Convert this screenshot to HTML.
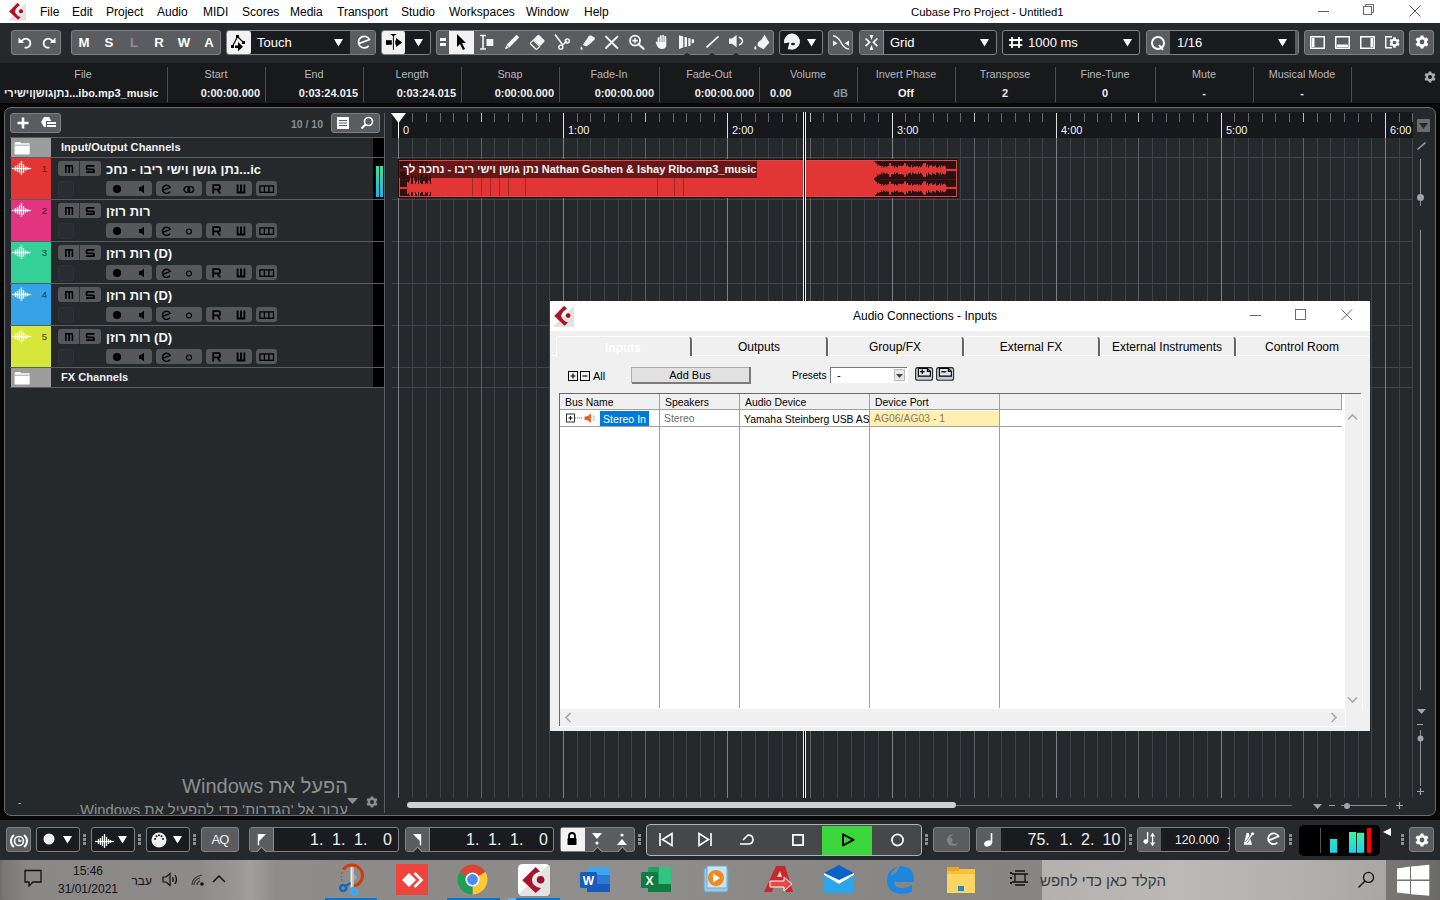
<!DOCTYPE html>
<html><head><meta charset="utf-8">
<style>
*{margin:0;padding:0;box-sizing:border-box}
html,body{width:1440px;height:900px;overflow:hidden;background:#060606;font-family:"Liberation Sans",sans-serif}
.a{position:absolute}
.t{position:absolute;white-space:nowrap}
</style></head><body>

<div class="a" style="left:0px;top:0px;width:1440px;height:23px;background:#ffffff;border-radius:0px;"></div>
<svg class="a" style="left:4px;top:0px;" width="24" height="24" viewBox="0 0 24 24"><path d="M4,20.8 L22,2.8 L22,20.8 Z" fill="#e2e2e2"/><path d="M13.5,2.8 L5,11.5 L14,19.8 L16.8,17.2 Q12,15.5 11,11.5 Q12,7.5 16,5.3 Z" fill="#ad1528"/><circle cx="17" cy="11.2" r="2" fill="#a0101f"/></svg>
<div class="t" style="left:40px;top:5.84px;font-size:12px;line-height:12px;color:#000;font-weight:400;">File</div>
<div class="t" style="left:72px;top:5.84px;font-size:12px;line-height:12px;color:#000;font-weight:400;">Edit</div>
<div class="t" style="left:106px;top:5.84px;font-size:12px;line-height:12px;color:#000;font-weight:400;">Project</div>
<div class="t" style="left:157px;top:5.84px;font-size:12px;line-height:12px;color:#000;font-weight:400;">Audio</div>
<div class="t" style="left:203px;top:5.84px;font-size:12px;line-height:12px;color:#000;font-weight:400;">MIDI</div>
<div class="t" style="left:242px;top:5.84px;font-size:12px;line-height:12px;color:#000;font-weight:400;">Scores</div>
<div class="t" style="left:290px;top:5.84px;font-size:12px;line-height:12px;color:#000;font-weight:400;">Media</div>
<div class="t" style="left:337px;top:5.84px;font-size:12px;line-height:12px;color:#000;font-weight:400;">Transport</div>
<div class="t" style="left:401px;top:5.84px;font-size:12px;line-height:12px;color:#000;font-weight:400;">Studio</div>
<div class="t" style="left:449px;top:5.84px;font-size:12px;line-height:12px;color:#000;font-weight:400;">Workspaces</div>
<div class="t" style="left:526px;top:5.84px;font-size:12px;line-height:12px;color:#000;font-weight:400;">Window</div>
<div class="t" style="left:584px;top:5.84px;font-size:12px;line-height:12px;color:#000;font-weight:400;">Help</div>
<div class="t" style="left:911px;top:7.23px;font-size:11.3px;line-height:11.3px;color:#000;font-weight:400;">Cubase Pro Project - Untitled1</div>
<div class="a" style="left:1318px;top:11px;width:11px;height:1px;background:#5a5a5a;border-radius:0px;"></div>
<svg class="a" style="left:1363px;top:4px;" width="12" height="12" viewBox="0 0 12 12"><rect x="0.5" y="2.5" width="8" height="8" fill="none" stroke="#6a6a6a"/><path d="M2.5,2.5 V0.5 H10.5 V8.5 H8.5" fill="none" stroke="#6a6a6a"/></svg>
<svg class="a" style="left:1409px;top:5px;" width="12" height="12" viewBox="0 0 12 12"><path d="M0.5,0.5 L11.5,11.5 M11.5,0.5 L0.5,11.5" stroke="#5a5a5a" stroke-width="1"/></svg>
<div class="a" style="left:0px;top:23px;width:1440px;height:40px;background:#26292c;border-radius:0px;"></div>
<div class="a" style="left:11px;top:30px;width:50px;height:25px;background:#5a5c60;border:1px solid #7e8084;border-radius:3px;"></div>
<svg class="a" style="left:18px;top:36px;" width="14" height="13" viewBox="0 0 14 13"><path d="M3.5,6 A4.5,4.5 0 1 1 6.5,11.5" fill="none" stroke="#fff" stroke-width="1.8"/><path d="M0.5,1.5 L0.5,7 L6,7 Z" fill="#fff"/></svg>
<svg class="a" style="left:42px;top:36px;" width="14" height="13" viewBox="0 0 14 13"><path d="M10.5,6 A4.5,4.5 0 1 0 7.5,11.5" fill="none" stroke="#fff" stroke-width="1.8"/><path d="M13.5,1.5 L13.5,7 L8,7 Z" fill="#fff"/></svg>
<div class="a" style="left:71px;top:30px;width:150px;height:25px;background:#5a5c60;border:1px solid #7e8084;border-radius:3px;"></div>
<div class="t" style="left:-216px;width:600px;text-align:center;top:36.43px;font-size:13.2px;line-height:13.2px;color:#fff;font-weight:700;">M</div>
<div class="t" style="left:-191px;width:600px;text-align:center;top:36.43px;font-size:13.2px;line-height:13.2px;color:#fff;font-weight:700;">S</div>
<div class="t" style="left:-166px;width:600px;text-align:center;top:36.43px;font-size:13.2px;line-height:13.2px;color:#8c8e92;font-weight:700;">L</div>
<div class="t" style="left:-141px;width:600px;text-align:center;top:36.43px;font-size:13.2px;line-height:13.2px;color:#fff;font-weight:700;">R</div>
<div class="t" style="left:-116px;width:600px;text-align:center;top:36.43px;font-size:13.2px;line-height:13.2px;color:#fff;font-weight:700;">W</div>
<div class="t" style="left:-91px;width:600px;text-align:center;top:36.43px;font-size:13.2px;line-height:13.2px;color:#fff;font-weight:700;">A</div>
<div class="a" style="left:226px;top:30px;width:150px;height:25px;background:#1a1b1e;border:1px solid #7e8084;border-radius:3px;"></div>
<div class="a" style="left:227px;top:31px;width:24px;height:23px;background:#f2f2f2;border:none;border-radius:2px;"></div>
<div class="a" style="left:350px;top:31px;width:25px;height:23px;background:#5a5c60;border-radius:0px;"></div>
<svg class="a" style="left:226px;top:30px;" width="25" height="25" viewBox="0 0 25 25"><path d="M11.5,6.5 L6.5,16.5 M11.5,6.5 L17.5,12.5" stroke="#000" stroke-width="1.2" fill="none"/><rect x="10" y="5" width="3" height="3" fill="#000"/><rect x="16" y="11" width="3" height="3" fill="#000"/><rect x="5" y="15" width="3" height="3" fill="#000"/><rect x="9" y="15.5" width="4" height="2.5" fill="#000"/><path d="M12,12 L17,16.7 L12,21.3 Z" fill="#000"/></svg>
<div class="t" style="left:257px;top:35.70px;font-size:13px;line-height:13px;color:#fff;font-weight:400;">Touch</div>
<svg class="a" style="left:334px;top:39px;" width="11" height="9" viewBox="0 0 11 9"><path d="M0,0 H9 L4.5,7.5 Z" fill="#fff"/></svg>
<svg class="a" style="left:356px;top:34px;" width="16" height="16" viewBox="0 0 16 16"><path d="M2.6,9.8 L13.5,5.6 A5.8,5.8 0 1 0 12.7,11.9" fill="none" stroke="#fff" stroke-width="1.7"/></svg>
<div class="a" style="left:381px;top:30px;width:50px;height:25px;background:#1a1b1e;border:1px solid #7e8084;border-radius:3px;"></div>
<div class="a" style="left:382px;top:31px;width:23px;height:23px;background:#f2f2f2;border:none;border-radius:2px;"></div>
<svg class="a" style="left:381px;top:30px;" width="25" height="25" viewBox="0 0 25 25"><rect x="5" y="10.2" width="5.8" height="4.6" fill="#000"/><path d="M12.4,4 V19.8" stroke="#000" stroke-width="1"/><path d="M9,4 H16 L12.4,6.3 Z" fill="#000"/><path d="M14.3,10.5 H15 V7.9 L21.2,12.5 L15,17.1 V14.5 H14.3 Z" fill="#000"/></svg>
<svg class="a" style="left:414px;top:39px;" width="11" height="9" viewBox="0 0 11 9"><path d="M0,0 H9 L4.5,7.5 Z" fill="#fff"/></svg>
<div class="a" style="left:436px;top:30px;width:338px;height:25px;background:#5a5c60;border:1px solid #7e8084;border-radius:3px;"></div>
<div class="a" style="left:449px;top:31px;width:25px;height:23px;background:#f2f2f2;border-radius:0px;"></div>
<svg class="a" style="left:440px;top:38px;" width="7" height="9" viewBox="0 0 7 9"><rect x="0" y="0" width="6" height="3" fill="#fff"/><rect x="0" y="5" width="6" height="3" fill="#fff"/></svg>
<svg class="a" style="left:456px;top:34px;" width="12" height="17" viewBox="0 0 12 17"><path d="M1,0 L1,13 L4,10 L7,16 L9,15 L6,9 L10,9 Z" fill="#000"/></svg>
<svg class="a" style="left:0;top:0" width="800" height="60" viewBox="0 0 800 60"><path d="M480,35.5 H486 M483,35.5 V49 M480,49 H486" stroke="#f4f4f4" stroke-width="1.6" fill="none"/><rect x="486.5" y="39" width="6.8" height="7" fill="#f4f4f4"/><path d="M505,49.3 L506.3,45 L515.8,35.5 Q516.6,34.7 517.4,35.5 L518.6,36.7 Q519.3,37.5 518.5,38.3 L509,47.8 Z" fill="#f4f4f4"/><path d="M506.3,45 L509,47.8" stroke="#5a5c60" stroke-width="0.8"/><path d="M537.5,35.3 Q538.5,34.4 539.5,35.3 L544.2,40 Q545,41 544.2,42 L537.3,48.8 Q536.5,49.5 535.6,48.8 L530.5,43.7 Q529.8,43 530.5,42.2 Z" fill="#f4f4f4"/><path d="M533.5,39.8 L540.2,46.4 L537,49.2 L530.2,42.8 Z" fill="#5a5c60"/><path d="M533.3,40.2 L539.6,46.6 L536.6,49.2 Q536.2,49.5 535.6,49 L530.6,44 Q530,43.4 530.6,42.8 Z" fill="none" stroke="#f4f4f4" stroke-width="1.1"/><path d="M555,34.5 L562.5,44.5 M567,41 L562,45.5" stroke="#f4f4f4" stroke-width="1.6" fill="none"/><circle cx="560.8" cy="47.2" r="2" fill="none" stroke="#f4f4f4" stroke-width="1.5"/><circle cx="567.3" cy="41" r="2" fill="none" stroke="#f4f4f4" stroke-width="1.5"/><path d="M583,45 L588.5,36.5 Q589.5,35 591,35.6 L594,37.3 Q595.3,38.2 594.6,39.6 L590,44 Z" fill="#f4f4f4"/><path d="M583,45 L586,40.5 L589.8,43.9 L586.3,46.6 Z" fill="#f4f4f4"/><path d="M581.2,46.5 Q580,48 580.6,49.2 Q581.6,50.2 582.6,49.2 Q583,48 581.2,46.5 Z" fill="#f4f4f4"/><path d="M606,36.6 L617.4,48 M617.4,36.6 L606,48" stroke="#f4f4f4" stroke-width="2" stroke-linecap="round"/><circle cx="635" cy="40.6" r="5" fill="none" stroke="#f4f4f4" stroke-width="1.9"/><path d="M638.5,44.3 L643.6,48.8" stroke="#f4f4f4" stroke-width="2.2" stroke-linecap="round"/><path d="M632.3,40.6 H637.7 M635,37.9 V43.3" stroke="#f4f4f4" stroke-width="1.6"/><path d="M657.6,41.5 V38.5 Q657.6,37.3 658.7,37.3 Q659.8,37.3 659.8,38.5 V36.4 Q659.8,35.3 660.9,35.3 Q662,35.3 662,36.4 V36 Q662,35 663,35 Q664,35 664.1,36 V37 Q664.2,36 665.2,36 Q666.3,36 666.3,37.2 V45 Q666.3,49 662,49 Q658.5,49 657.2,46 L655.7,42.8 Q655.5,41.6 656.5,41.5 Q657.2,41.5 657.6,42.3 Z" fill="#f4f4f4"/><path d="M659.8,38.2 V42 M662,36.2 V42 M664.1,36.8 V42" stroke="#5a5c60" stroke-width="0.6"/><path d="M679,35.3 L683.2,36.4 V47.6 L679,48.9 Z" fill="#f4f4f4"/><path d="M684.5,36.8 L687,37.5 V46.6 L684.5,47.3 Z" fill="#f4f4f4"/><path d="M688.3,37.9 L690.5,38.5 V45.6 L688.3,46.2 Z" fill="#f4f4f4"/><path d="M691.7,38.9 L694,39.5 V42.7 L691.7,43.6 Z" fill="#f4f4f4"/><path d="M706.5,47.3 L718.5,36.3" stroke="#f4f4f4" stroke-width="1.8"/><path d="M729,38.5 H732 L736.6,35 V47.2 L732,43.8 H729 Z" fill="#f4f4f4"/><path d="M739,37.2 Q742.5,38.5 742.5,41.1 Q742.5,43.8 739,45" stroke="#f4f4f4" stroke-width="1.5" fill="none"/><path d="M758,42.3 L764.5,37.5 L768.8,43.2 L763.5,49.3 L757.5,46 Z" fill="#f4f4f4"/><path d="M761.5,41.5 L764.5,36.3 L768.8,43.2" stroke="#f4f4f4" stroke-width="1.6" fill="none"/><path d="M755.3,45.8 Q753.8,47.8 754.3,49 Q755.3,50.2 756.3,49 Q756.8,47.8 755.3,45.8 Z" fill="#f4f4f4"/></svg>
<svg class="a" style="left:683px;top:51px;" width="8" height="5" viewBox="0 0 8 5"><path d="M0,4.5 L4,1 L8,4.5 Z" fill="#26292c"/><path d="M0,4 L4,0.8 L8,4" fill="none" stroke="#6e7074" stroke-width="1"/></svg>
<svg class="a" style="left:708px;top:51px;" width="8" height="5" viewBox="0 0 8 5"><path d="M0,4.5 L4,1 L8,4.5 Z" fill="#26292c"/><path d="M0,4 L4,0.8 L8,4" fill="none" stroke="#6e7074" stroke-width="1"/></svg>
<svg class="a" style="left:732px;top:51px;" width="8" height="5" viewBox="0 0 8 5"><path d="M0,4.5 L4,1 L8,4.5 Z" fill="#26292c"/><path d="M0,4 L4,0.8 L8,4" fill="none" stroke="#6e7074" stroke-width="1"/></svg>
<div class="a" style="left:779px;top:30px;width:44px;height:25px;background:#1a1b1e;border:1px solid #7e8084;border-radius:3px;"></div>
<svg class="a" style="left:806.5px;top:39px;" width="11" height="9" viewBox="0 0 11 9"><path d="M0,0 H9 L4.5,7.5 Z" fill="#fff"/></svg>
<div class="a" style="left:828px;top:30px;width:25px;height:25px;background:#5a5c60;border:1px solid #7e8084;border-radius:3px;"></div>
<svg class="a" style="left:0;top:0" width="900" height="60" viewBox="0 0 900 60"><path d="M784,42 A8,8 0 1 1 789.5,49.2 Q787.5,49.8 787.8,48.5 L789.3,43.3 Q789.5,42.4 788.5,42.5 L785.2,43.2 Q783.8,43.3 784,42 Z" fill="#f2f2f2"/><ellipse cx="793" cy="44" rx="2" ry="1.3" fill="#1a1b1e"/><path d="M833,35.8 Q837.5,36 841,42.5 Q844.5,49 849,49" fill="none" stroke="#f2f2f2" stroke-width="1.5"/><path d="M833,40.5 L837.5,43.2 L833,46 Z M849,40.5 L844.5,43.2 L849,46 Z" fill="#f2f2f2"/></svg>
<div class="a" style="left:859px;top:30px;width:138px;height:25px;background:#1a1b1e;border:1px solid #7e8084;border-radius:3px;"></div>
<div class="a" style="left:860px;top:31px;width:24px;height:23px;background:#5a5c60;border-radius:0px;"></div>
<svg class="a" style="left:864px;top:35px;" width="16" height="16" viewBox="0 0 16 16"><path d="M1.6,3.5 L5.6,7.3 L1.6,11.1 M13.4,3.5 L9.4,7.3 L13.4,11.1" stroke="#fff" stroke-width="1.6" fill="none"/><path d="M5.6,0 H9.4 L7.5,4.9 Z M5.6,15 H9.4 L7.5,10 Z" fill="#fff"/></svg>
<div class="a" style="left:883px;top:31px;width:1px;height:23px;background:#8a8c90;border-radius:0px;"></div>
<div class="t" style="left:890px;top:35.70px;font-size:13px;line-height:13px;color:#fff;font-weight:400;">Grid</div>
<svg class="a" style="left:980px;top:39px;" width="11" height="9" viewBox="0 0 11 9"><path d="M0,0 H9 L4.5,7.5 Z" fill="#fff"/></svg>
<div class="a" style="left:1002px;top:30px;width:138px;height:25px;background:#1a1b1e;border:1px solid #7e8084;border-radius:3px;"></div>
<svg class="a" style="left:1008px;top:36px;" width="16" height="14" viewBox="0 0 16 14"><path d="M4,1 V12 M11,1 V12 M1,4 H14.3 M1,9.2 H14.3" stroke="#fff" stroke-width="1.8"/></svg>
<div class="t" style="left:1028px;top:35.70px;font-size:13px;line-height:13px;color:#fff;font-weight:400;">1000 ms</div>
<svg class="a" style="left:1123px;top:39px;" width="11" height="9" viewBox="0 0 11 9"><path d="M0,0 H9 L4.5,7.5 Z" fill="#fff"/></svg>
<div class="a" style="left:1146px;top:30px;width:153px;height:25px;background:#1a1b1e;border:1px solid #7e8084;border-radius:3px;"></div>
<div class="a" style="left:1147px;top:31px;width:23px;height:23px;background:#5a5c60;border-radius:0px;"></div>
<div class="a" style="left:1295px;top:31px;width:3px;height:23px;background:#5a5c60;border-radius:0px;"></div>
<svg class="a" style="left:1150px;top:35px;" width="17" height="17" viewBox="0 0 17 17"><circle cx="8" cy="8" r="6" fill="none" stroke="#fff" stroke-width="2"/><path d="M9,10 L13,15" stroke="#fff" stroke-width="2"/></svg>
<div class="t" style="left:1177px;top:35.70px;font-size:13px;line-height:13px;color:#fff;font-weight:400;">1/16</div>
<svg class="a" style="left:1278px;top:39px;" width="11" height="9" viewBox="0 0 11 9"><path d="M0,0 H9 L4.5,7.5 Z" fill="#fff"/></svg>
<div class="a" style="left:1304px;top:30px;width:100px;height:25px;background:#5a5c60;border:1px solid #7e8084;border-radius:3px;"></div>
<svg class="a" style="left:1310px;top:36px;" width="16" height="14" viewBox="0 0 16 14"><rect x="0.75" y="0.75" width="13.5" height="11.5" fill="none" stroke="#fff" stroke-width="1.5"/><rect x="2" y="2" width="2.5" height="9" fill="#fff"/></svg>
<svg class="a" style="left:1335px;top:36px;" width="16" height="14" viewBox="0 0 16 14"><rect x="0.75" y="0.75" width="13.5" height="11.5" fill="none" stroke="#fff" stroke-width="1.5"/><rect x="2" y="8.5" width="11" height="2.5" fill="#fff"/></svg>
<svg class="a" style="left:1360px;top:36px;" width="16" height="14" viewBox="0 0 16 14"><rect x="0.75" y="0.75" width="13.5" height="11.5" fill="none" stroke="#fff" stroke-width="1.5"/><rect x="10.5" y="2" width="2.5" height="9" fill="#fff"/></svg>
<svg class="a" style="left:1385px;top:36px;" width="16" height="14" viewBox="0 0 16 14"><path d="M7,0.75 H0.75 V11.75 H7" fill="none" stroke="#fff" stroke-width="1.4"/></svg>
<div class="a" style="left:1409px;top:30px;width:25px;height:25px;background:#5a5c60;border:1px solid #7e8084;border-radius:3px;"></div>
<svg class="a" style="left:1414.7px;top:35px;" width="14" height="14" viewBox="0 0 14 14"><path d="M5.53,0.44 L8.47,0.44 L8.65,2.09 L10.43,3.11 L11.95,2.45 L13.41,4.99 L12.08,5.98 L12.08,8.02 L13.41,9.01 L11.95,11.55 L10.43,10.89 L8.65,11.91 L8.47,13.56 L5.53,13.56 L5.35,11.91 L3.57,10.89 L2.05,11.55 L0.59,9.01 L1.92,8.02 L1.92,5.98 L0.59,4.99 L2.05,2.45 L3.57,3.11 L5.35,2.09 Z" fill="#fff"/><circle cx="7.0" cy="7.0" r="2.3800000000000003" fill="#5a5c60"/></svg>
<svg class="a" style="left:1388.5px;top:36.5px;" width="11" height="11" viewBox="0 0 11 11"><path d="M4.35,0.35 L6.65,0.35 L6.80,1.64 L8.19,2.45 L9.39,1.93 L10.54,3.92 L9.49,4.70 L9.49,6.30 L10.54,7.08 L9.39,9.07 L8.19,8.55 L6.80,9.36 L6.65,10.65 L4.35,10.65 L4.20,9.36 L2.81,8.55 L1.61,9.07 L0.46,7.08 L1.51,6.30 L1.51,4.70 L0.46,3.92 L1.61,1.93 L2.81,2.45 L4.20,1.64 Z" fill="#fff"/><circle cx="5.5" cy="5.5" r="1.87" fill="#5a5c60"/></svg>
<div class="a" style="left:0px;top:63px;width:1440px;height:40px;background:#18191b;border-radius:0px;"></div>
<div class="a" style="left:167px;top:67px;width:1px;height:35px;background:#4a4c50;border-radius:0px;"></div>
<div class="a" style="left:265px;top:67px;width:1px;height:35px;background:#4a4c50;border-radius:0px;"></div>
<div class="a" style="left:363px;top:67px;width:1px;height:35px;background:#4a4c50;border-radius:0px;"></div>
<div class="a" style="left:461px;top:67px;width:1px;height:35px;background:#4a4c50;border-radius:0px;"></div>
<div class="a" style="left:559px;top:67px;width:1px;height:35px;background:#4a4c50;border-radius:0px;"></div>
<div class="a" style="left:659px;top:67px;width:1px;height:35px;background:#4a4c50;border-radius:0px;"></div>
<div class="a" style="left:759px;top:67px;width:1px;height:35px;background:#4a4c50;border-radius:0px;"></div>
<div class="a" style="left:857px;top:67px;width:1px;height:35px;background:#4a4c50;border-radius:0px;"></div>
<div class="a" style="left:955px;top:67px;width:1px;height:35px;background:#4a4c50;border-radius:0px;"></div>
<div class="a" style="left:1055px;top:67px;width:1px;height:35px;background:#4a4c50;border-radius:0px;"></div>
<div class="a" style="left:1155px;top:67px;width:1px;height:35px;background:#4a4c50;border-radius:0px;"></div>
<div class="a" style="left:1253px;top:67px;width:1px;height:35px;background:#4a4c50;border-radius:0px;"></div>
<div class="a" style="left:1351px;top:67px;width:1px;height:35px;background:#4a4c50;border-radius:0px;"></div>
<div class="t" style="left:-217px;width:600px;text-align:center;top:68.86px;font-size:10.8px;line-height:10.8px;color:#b4b8be;font-weight:400;">File</div>
<div class="t" style="left:-84px;width:600px;text-align:center;top:68.86px;font-size:10.8px;line-height:10.8px;color:#b4b8be;font-weight:400;">Start</div>
<div class="t" style="left:14px;width:600px;text-align:center;top:68.86px;font-size:10.8px;line-height:10.8px;color:#b4b8be;font-weight:400;">End</div>
<div class="t" style="left:112px;width:600px;text-align:center;top:68.86px;font-size:10.8px;line-height:10.8px;color:#b4b8be;font-weight:400;">Length</div>
<div class="t" style="left:210px;width:600px;text-align:center;top:68.86px;font-size:10.8px;line-height:10.8px;color:#b4b8be;font-weight:400;">Snap</div>
<div class="t" style="left:309px;width:600px;text-align:center;top:68.86px;font-size:10.8px;line-height:10.8px;color:#b4b8be;font-weight:400;">Fade-In</div>
<div class="t" style="left:409px;width:600px;text-align:center;top:68.86px;font-size:10.8px;line-height:10.8px;color:#b4b8be;font-weight:400;">Fade-Out</div>
<div class="t" style="left:508px;width:600px;text-align:center;top:68.86px;font-size:10.8px;line-height:10.8px;color:#b4b8be;font-weight:400;">Volume</div>
<div class="t" style="left:606px;width:600px;text-align:center;top:68.86px;font-size:10.8px;line-height:10.8px;color:#b4b8be;font-weight:400;">Invert Phase</div>
<div class="t" style="left:705px;width:600px;text-align:center;top:68.86px;font-size:10.8px;line-height:10.8px;color:#b4b8be;font-weight:400;">Transpose</div>
<div class="t" style="left:805px;width:600px;text-align:center;top:68.86px;font-size:10.8px;line-height:10.8px;color:#b4b8be;font-weight:400;">Fine-Tune</div>
<div class="t" style="left:904px;width:600px;text-align:center;top:68.86px;font-size:10.8px;line-height:10.8px;color:#b4b8be;font-weight:400;">Mute</div>
<div class="t" style="left:1002px;width:600px;text-align:center;top:68.86px;font-size:10.8px;line-height:10.8px;color:#b4b8be;font-weight:400;">Musical Mode</div>
<div class="t" style="left:4px;top:88.19px;font-size:11px;line-height:11px;color:#f2f2f2;font-weight:700;">נתןגושןוישירי...ibo.mp3_music</div>
<div class="t" style="left:-340px;width:600px;text-align:right;top:88.19px;font-size:11px;line-height:11px;color:#f2f2f2;font-weight:700;">0:00:00.000</div>
<div class="t" style="left:-242px;width:600px;text-align:right;top:88.19px;font-size:11px;line-height:11px;color:#f2f2f2;font-weight:700;">0:03:24.015</div>
<div class="t" style="left:-144px;width:600px;text-align:right;top:88.19px;font-size:11px;line-height:11px;color:#f2f2f2;font-weight:700;">0:03:24.015</div>
<div class="t" style="left:-46px;width:600px;text-align:right;top:88.19px;font-size:11px;line-height:11px;color:#f2f2f2;font-weight:700;">0:00:00.000</div>
<div class="t" style="left:54px;width:600px;text-align:right;top:88.19px;font-size:11px;line-height:11px;color:#f2f2f2;font-weight:700;">0:00:00.000</div>
<div class="t" style="left:154px;width:600px;text-align:right;top:88.19px;font-size:11px;line-height:11px;color:#f2f2f2;font-weight:700;">0:00:00.000</div>
<div class="t" style="left:770px;top:88.19px;font-size:11px;line-height:11px;color:#f2f2f2;font-weight:700;">0.00</div>
<div class="t" style="left:248px;width:600px;text-align:right;top:88.19px;font-size:11px;line-height:11px;color:#8c9096;font-weight:700;">dB</div>
<div class="t" style="left:606px;width:600px;text-align:center;top:88.19px;font-size:11px;line-height:11px;color:#f2f2f2;font-weight:700;">Off</div>
<div class="t" style="left:705px;width:600px;text-align:center;top:88.19px;font-size:11px;line-height:11px;color:#f2f2f2;font-weight:700;">2</div>
<div class="t" style="left:805px;width:600px;text-align:center;top:88.19px;font-size:11px;line-height:11px;color:#f2f2f2;font-weight:700;">0</div>
<div class="t" style="left:904px;width:600px;text-align:center;top:88.19px;font-size:11px;line-height:11px;color:#f2f2f2;font-weight:700;">-</div>
<div class="t" style="left:1002px;width:600px;text-align:center;top:88.19px;font-size:11px;line-height:11px;color:#f2f2f2;font-weight:700;">-</div>
<svg class="a" style="left:1424px;top:71px;" width="12" height="12" viewBox="0 0 12 12"><path d="M4.74,0.38 L7.26,0.38 L7.42,1.79 L8.94,2.67 L10.24,2.10 L11.50,4.28 L10.35,5.12 L10.35,6.88 L11.50,7.72 L10.24,9.90 L8.94,9.33 L7.42,10.21 L7.26,11.62 L4.74,11.62 L4.58,10.21 L3.06,9.33 L1.76,9.90 L0.50,7.72 L1.65,6.88 L1.65,5.12 L0.50,4.28 L1.76,2.10 L3.06,2.67 L4.58,1.79 Z" fill="#a8abb0"/><circle cx="6.0" cy="6.0" r="2.04" fill="#17181b"/></svg>
<div class="a" style="left:0px;top:103px;width:1440px;height:717px;background:#060606;border-radius:0px;"></div>
<div class="a" style="left:4px;top:107px;width:1432px;height:709px;background:#25292c;border:1.5px solid #6a6c70;border-radius:7px;"></div>
<div class="a" style="left:10px;top:113px;width:51px;height:20px;background:#5a5c60;border:1px solid #7e8084;border-radius:3px;"></div>
<svg class="a" style="left:16px;top:116px;" width="14" height="14" viewBox="0 0 14 14"><path d="M7,1.5 V12.5 M1.5,7 H12.5" stroke="#fff" stroke-width="2.6"/></svg>
<svg class="a" style="left:39px;top:116px;" width="18" height="14" viewBox="0 0 18 14"><path d="M2,6 L5,1 H10 L13,6 L10,11 H5 Z" fill="#fff"/><rect x="8" y="6" width="9" height="2" fill="#fff"/><rect x="8" y="9" width="9" height="2" fill="#fff"/><rect x="7" y="5" width="1" height="7" fill="#5a5c60"/><rect x="8" y="5" width="9" height="1" fill="#5a5c60"/><rect x="8" y="8" width="9" height="1" fill="#5a5c60"/></svg>
<div class="t" style="left:-277px;width:600px;text-align:right;top:119.11px;font-size:10.5px;line-height:10.5px;color:#8a9099;font-weight:700;">10 / 10</div>
<div class="a" style="left:331px;top:113px;width:49px;height:20px;background:#5a5c60;border:1px solid #7e8084;border-radius:3px;"></div>
<svg class="a" style="left:336px;top:116px;" width="14" height="14" viewBox="0 0 14 14"><rect x="1" y="1" width="12" height="12" fill="#fff"/><path d="M3,4.5 H11 M3,7 H11 M3,9.5 H11" stroke="#5a5c60" stroke-width="1.2"/></svg>
<svg class="a" style="left:360px;top:116px;" width="14" height="14" viewBox="0 0 14 14"><circle cx="8.5" cy="5.5" r="4" fill="none" stroke="#fff" stroke-width="1.6"/><path d="M5.5,8.5 L1.5,12.5" stroke="#fff" stroke-width="2"/></svg>
<div class="a" style="left:10px;top:137px;width:375px;height:250px;background:#25292c;border-radius:0px;"></div>
<div class="a" style="left:373px;top:137px;width:11px;height:250px;background:#000;border-radius:0px;"></div>
<div class="a" style="left:10px;top:137px;width:374px;height:1px;background:#5a5d61;border-radius:0px;"></div>
<div class="a" style="left:10px;top:157px;width:374px;height:1px;background:#5a5d61;border-radius:0px;"></div>
<div class="a" style="left:10px;top:199px;width:374px;height:1px;background:#5a5d61;border-radius:0px;"></div>
<div class="a" style="left:10px;top:241px;width:374px;height:1px;background:#5a5d61;border-radius:0px;"></div>
<div class="a" style="left:10px;top:283px;width:374px;height:1px;background:#5a5d61;border-radius:0px;"></div>
<div class="a" style="left:10px;top:325px;width:374px;height:1px;background:#5a5d61;border-radius:0px;"></div>
<div class="a" style="left:10px;top:367px;width:374px;height:1px;background:#5a5d61;border-radius:0px;"></div>
<div class="a" style="left:10px;top:387px;width:374px;height:1px;background:#5a5d61;border-radius:0px;"></div>
<div class="a" style="left:384px;top:113px;width:1px;height:700px;background:#585b5f;border-radius:0px;"></div>
<div class="a" style="left:11px;top:138px;width:40px;height:19px;background:#9c9c9c;border-radius:0px;"></div>
<svg class="a" style="left:14px;top:141px;" width="17" height="15" viewBox="0 0 17 15"><path d="M0.6,2.5 Q0.6,0.9 2,0.9 H6 L7.3,2.3 H14.8 Q15.7,2.3 15.7,3.2 V12.6 Q15.7,13.5 14.8,13.5 H1.5 Q0.6,13.5 0.6,12.6 Z" fill="#fff"/><path d="M0.6,4.2 H15.7" stroke="#9c9c9c" stroke-width="0.9"/></svg>
<div class="t" style="left:61px;top:142.10px;font-size:11.1px;line-height:11.1px;color:#f2f2f2;font-weight:700;">Input/Output Channels</div>
<div class="a" style="left:11px;top:368px;width:40px;height:19px;background:#9c9c9c;border-radius:0px;"></div>
<svg class="a" style="left:14px;top:371px;" width="17" height="15" viewBox="0 0 17 15"><path d="M0.6,2.5 Q0.6,0.9 2,0.9 H6 L7.3,2.3 H14.8 Q15.7,2.3 15.7,3.2 V12.6 Q15.7,13.5 14.8,13.5 H1.5 Q0.6,13.5 0.6,12.6 Z" fill="#fff"/><path d="M0.6,4.2 H15.7" stroke="#9c9c9c" stroke-width="0.9"/></svg>
<div class="t" style="left:61px;top:372.10px;font-size:11.1px;line-height:11.1px;color:#f2f2f2;font-weight:700;">FX Channels</div>
<div class="a" style="left:11px;top:158px;width:40px;height:41px;background:#e23535;border-radius:0px;"></div>
<svg class="a" style="left:12px;top:160px;" width="19" height="15" viewBox="0 0 19 15"><path d="M0,8.5 H19" stroke="#fff" stroke-width="1.2"/><path d="M3.5,6 V11 M5.5,5 V12 M7.5,3 V13 M9.5,1 V15 M11.5,4 V13 M13.5,6 V11 M15.5,7 V10" stroke="#fff" stroke-width="1.3"/></svg>
<div class="t" style="left:-553px;width:600px;text-align:right;top:163.96px;font-size:9.5px;line-height:9.5px;color:#6e1111;font-weight:400;">1</div>
<div class="a" style="left:58px;top:161px;width:43px;height:15px;background:#56585c;border-radius:3px;"></div>
<div class="a" style="left:79px;top:161px;width:1px;height:15px;background:#2f3236;border-radius:0px;"></div>
<svg class="a" style="left:64px;top:164px;" width="10" height="10" viewBox="0 0 10 10"><path d="M1,1 H8 Q9.2,1 9.2,2.2 V9 H7.6 V2.6 H5.9 V9 H4.3 V2.6 H2.6 V9 H1 Z" fill="#000"/></svg>
<svg class="a" style="left:85px;top:164px;" width="10" height="10" viewBox="0 0 10 10"><path d="M9.4,1.9 H2.4 Q1.6,1.9 1.6,2.7 V4.7 Q1.6,5.4 2.4,5.4 H8.2 Q8.9,5.4 8.9,6.2 V8.1 H1" fill="none" stroke="#000" stroke-width="1.8"/></svg>
<div class="t" style="left:106px;top:162.50px;font-size:13px;line-height:13px;color:#f6f6f6;font-weight:700;">נתן גושן וישי ריבו - נחכ...ic</div>
<div class="a" style="left:58px;top:181px;width:16px;height:16px;background:#292c30;border:1px solid #2f3236;border-radius:3px;"></div>
<div class="a" style="left:106px;top:181px;width:46px;height:15px;background:#56585c;border-radius:3px;"></div>
<svg class="a" style="left:112px;top:184px;" width="10" height="10" viewBox="0 0 10 10"><circle cx="5" cy="5" r="4.1" fill="#000"/></svg>
<svg class="a" style="left:138px;top:184px;" width="7" height="10" viewBox="0 0 7 10"><path d="M1,3 H3 L6,0.7 V9.3 L3,7 H1 Z" fill="#000"/></svg>
<div class="a" style="left:156px;top:181px;width:46px;height:15px;background:#56585c;border-radius:3px;"></div>
<svg class="a" style="left:161px;top:184px;" width="11" height="10" viewBox="0 0 11 10"><path d="M1.6,6.4 L9.2,3.4 A4.1,4.1 0 1 0 9,7.6" fill="none" stroke="#000" stroke-width="1.4"/></svg>
<svg class="a" style="left:183px;top:185px;" width="12" height="9" viewBox="0 0 12 9"><circle cx="3.8" cy="4.5" r="2.8" fill="none" stroke="#000" stroke-width="1.3"/><circle cx="7.8" cy="4.5" r="2.8" fill="none" stroke="#000" stroke-width="1.3"/></svg>
<div class="a" style="left:206px;top:181px;width:46px;height:15px;background:#56585c;border-radius:3px;"></div>
<svg class="a" style="left:212px;top:184px;" width="9" height="10" viewBox="0 0 9 10"><path d="M1.2,9.6 V1.2 H6.8 Q7.9,1.2 7.9,2.3 V4.4 Q7.9,5.4 6.8,5.4 H1.2 M5.4,5.4 L8.2,9.6" fill="none" stroke="#000" stroke-width="1.8"/></svg>
<svg class="a" style="left:236px;top:184px;" width="10" height="10" viewBox="0 0 10 10"><path d="M1.6,0.6 V8.5 H8.4 V0.6 M5,0.6 V8.5" fill="none" stroke="#000" stroke-width="1.8"/></svg>
<div class="a" style="left:256px;top:181px;width:21px;height:15px;background:#56585c;border-radius:3px;"></div>
<svg class="a" style="left:259px;top:185px;" width="16" height="9" viewBox="0 0 16 9"><rect x="0.9" y="0.9" width="13.6" height="6.4" fill="none" stroke="#000" stroke-width="1.3"/><path d="M5.4,1 V7.2 M9.9,1 V7.2" stroke="#000" stroke-width="1.3"/></svg>
<div class="a" style="left:11px;top:200px;width:40px;height:41px;background:#e2357f;border-radius:0px;"></div>
<svg class="a" style="left:12px;top:202px;" width="19" height="15" viewBox="0 0 19 15"><path d="M0,8.5 H19" stroke="#fff" stroke-width="1.2"/><path d="M3.5,6 V11 M5.5,5 V12 M7.5,3 V13 M9.5,1 V15 M11.5,4 V13 M13.5,6 V11 M15.5,7 V10" stroke="#fff" stroke-width="1.3"/></svg>
<div class="t" style="left:-553px;width:600px;text-align:right;top:205.96px;font-size:9.5px;line-height:9.5px;color:#4a1030;font-weight:400;">2</div>
<div class="a" style="left:58px;top:203px;width:43px;height:15px;background:#56585c;border-radius:3px;"></div>
<div class="a" style="left:79px;top:203px;width:1px;height:15px;background:#2f3236;border-radius:0px;"></div>
<svg class="a" style="left:64px;top:206px;" width="10" height="10" viewBox="0 0 10 10"><path d="M1,1 H8 Q9.2,1 9.2,2.2 V9 H7.6 V2.6 H5.9 V9 H4.3 V2.6 H2.6 V9 H1 Z" fill="#000"/></svg>
<svg class="a" style="left:85px;top:206px;" width="10" height="10" viewBox="0 0 10 10"><path d="M9.4,1.9 H2.4 Q1.6,1.9 1.6,2.7 V4.7 Q1.6,5.4 2.4,5.4 H8.2 Q8.9,5.4 8.9,6.2 V8.1 H1" fill="none" stroke="#000" stroke-width="1.8"/></svg>
<div class="t" style="left:106px;top:204.50px;font-size:13px;line-height:13px;color:#f6f6f6;font-weight:700;">רות רוזן</div>
<div class="a" style="left:58px;top:223px;width:16px;height:16px;background:#292c30;border:1px solid #2f3236;border-radius:3px;"></div>
<div class="a" style="left:106px;top:223px;width:46px;height:15px;background:#56585c;border-radius:3px;"></div>
<svg class="a" style="left:112px;top:226px;" width="10" height="10" viewBox="0 0 10 10"><circle cx="5" cy="5" r="4.1" fill="#000"/></svg>
<svg class="a" style="left:138px;top:226px;" width="7" height="10" viewBox="0 0 7 10"><path d="M1,3 H3 L6,0.7 V9.3 L3,7 H1 Z" fill="#000"/></svg>
<div class="a" style="left:156px;top:223px;width:46px;height:15px;background:#56585c;border-radius:3px;"></div>
<svg class="a" style="left:161px;top:226px;" width="11" height="10" viewBox="0 0 11 10"><path d="M1.6,6.4 L9.2,3.4 A4.1,4.1 0 1 0 9,7.6" fill="none" stroke="#000" stroke-width="1.4"/></svg>
<svg class="a" style="left:184px;top:227px;" width="10" height="9" viewBox="0 0 10 9"><circle cx="5" cy="4.5" r="2.5" fill="none" stroke="#000" stroke-width="1.2"/></svg>
<div class="a" style="left:206px;top:223px;width:46px;height:15px;background:#56585c;border-radius:3px;"></div>
<svg class="a" style="left:212px;top:226px;" width="9" height="10" viewBox="0 0 9 10"><path d="M1.2,9.6 V1.2 H6.8 Q7.9,1.2 7.9,2.3 V4.4 Q7.9,5.4 6.8,5.4 H1.2 M5.4,5.4 L8.2,9.6" fill="none" stroke="#000" stroke-width="1.8"/></svg>
<svg class="a" style="left:236px;top:226px;" width="10" height="10" viewBox="0 0 10 10"><path d="M1.6,0.6 V8.5 H8.4 V0.6 M5,0.6 V8.5" fill="none" stroke="#000" stroke-width="1.8"/></svg>
<div class="a" style="left:256px;top:223px;width:21px;height:15px;background:#56585c;border-radius:3px;"></div>
<svg class="a" style="left:259px;top:227px;" width="16" height="9" viewBox="0 0 16 9"><rect x="0.9" y="0.9" width="13.6" height="6.4" fill="none" stroke="#000" stroke-width="1.3"/><path d="M5.4,1 V7.2 M9.9,1 V7.2" stroke="#000" stroke-width="1.3"/></svg>
<div class="a" style="left:11px;top:242px;width:40px;height:41px;background:#35cf98;border-radius:0px;"></div>
<svg class="a" style="left:12px;top:244px;" width="19" height="15" viewBox="0 0 19 15"><path d="M0,8.5 H19" stroke="#fff" stroke-width="1.2"/><path d="M3.5,6 V11 M5.5,5 V12 M7.5,3 V13 M9.5,1 V15 M11.5,4 V13 M13.5,6 V11 M15.5,7 V10" stroke="#fff" stroke-width="1.3"/></svg>
<div class="t" style="left:-553px;width:600px;text-align:right;top:247.96px;font-size:9.5px;line-height:9.5px;color:#114a30;font-weight:400;">3</div>
<div class="a" style="left:58px;top:245px;width:43px;height:15px;background:#56585c;border-radius:3px;"></div>
<div class="a" style="left:79px;top:245px;width:1px;height:15px;background:#2f3236;border-radius:0px;"></div>
<svg class="a" style="left:64px;top:248px;" width="10" height="10" viewBox="0 0 10 10"><path d="M1,1 H8 Q9.2,1 9.2,2.2 V9 H7.6 V2.6 H5.9 V9 H4.3 V2.6 H2.6 V9 H1 Z" fill="#000"/></svg>
<svg class="a" style="left:85px;top:248px;" width="10" height="10" viewBox="0 0 10 10"><path d="M9.4,1.9 H2.4 Q1.6,1.9 1.6,2.7 V4.7 Q1.6,5.4 2.4,5.4 H8.2 Q8.9,5.4 8.9,6.2 V8.1 H1" fill="none" stroke="#000" stroke-width="1.8"/></svg>
<div class="t" style="left:106px;top:246.50px;font-size:13px;line-height:13px;color:#f6f6f6;font-weight:700;">רות רוזן (D)</div>
<div class="a" style="left:58px;top:265px;width:16px;height:16px;background:#292c30;border:1px solid #2f3236;border-radius:3px;"></div>
<div class="a" style="left:106px;top:265px;width:46px;height:15px;background:#56585c;border-radius:3px;"></div>
<svg class="a" style="left:112px;top:268px;" width="10" height="10" viewBox="0 0 10 10"><circle cx="5" cy="5" r="4.1" fill="#000"/></svg>
<svg class="a" style="left:138px;top:268px;" width="7" height="10" viewBox="0 0 7 10"><path d="M1,3 H3 L6,0.7 V9.3 L3,7 H1 Z" fill="#000"/></svg>
<div class="a" style="left:156px;top:265px;width:46px;height:15px;background:#56585c;border-radius:3px;"></div>
<svg class="a" style="left:161px;top:268px;" width="11" height="10" viewBox="0 0 11 10"><path d="M1.6,6.4 L9.2,3.4 A4.1,4.1 0 1 0 9,7.6" fill="none" stroke="#000" stroke-width="1.4"/></svg>
<svg class="a" style="left:184px;top:269px;" width="10" height="9" viewBox="0 0 10 9"><circle cx="5" cy="4.5" r="2.5" fill="none" stroke="#000" stroke-width="1.2"/></svg>
<div class="a" style="left:206px;top:265px;width:46px;height:15px;background:#56585c;border-radius:3px;"></div>
<svg class="a" style="left:212px;top:268px;" width="9" height="10" viewBox="0 0 9 10"><path d="M1.2,9.6 V1.2 H6.8 Q7.9,1.2 7.9,2.3 V4.4 Q7.9,5.4 6.8,5.4 H1.2 M5.4,5.4 L8.2,9.6" fill="none" stroke="#000" stroke-width="1.8"/></svg>
<svg class="a" style="left:236px;top:268px;" width="10" height="10" viewBox="0 0 10 10"><path d="M1.6,0.6 V8.5 H8.4 V0.6 M5,0.6 V8.5" fill="none" stroke="#000" stroke-width="1.8"/></svg>
<div class="a" style="left:256px;top:265px;width:21px;height:15px;background:#56585c;border-radius:3px;"></div>
<svg class="a" style="left:259px;top:269px;" width="16" height="9" viewBox="0 0 16 9"><rect x="0.9" y="0.9" width="13.6" height="6.4" fill="none" stroke="#000" stroke-width="1.3"/><path d="M5.4,1 V7.2 M9.9,1 V7.2" stroke="#000" stroke-width="1.3"/></svg>
<div class="a" style="left:11px;top:284px;width:40px;height:41px;background:#35a3e6;border-radius:0px;"></div>
<svg class="a" style="left:12px;top:286px;" width="19" height="15" viewBox="0 0 19 15"><path d="M0,8.5 H19" stroke="#fff" stroke-width="1.2"/><path d="M3.5,6 V11 M5.5,5 V12 M7.5,3 V13 M9.5,1 V15 M11.5,4 V13 M13.5,6 V11 M15.5,7 V10" stroke="#fff" stroke-width="1.3"/></svg>
<div class="t" style="left:-553px;width:600px;text-align:right;top:289.96px;font-size:9.5px;line-height:9.5px;color:#0f3350;font-weight:400;">4</div>
<div class="a" style="left:58px;top:287px;width:43px;height:15px;background:#56585c;border-radius:3px;"></div>
<div class="a" style="left:79px;top:287px;width:1px;height:15px;background:#2f3236;border-radius:0px;"></div>
<svg class="a" style="left:64px;top:290px;" width="10" height="10" viewBox="0 0 10 10"><path d="M1,1 H8 Q9.2,1 9.2,2.2 V9 H7.6 V2.6 H5.9 V9 H4.3 V2.6 H2.6 V9 H1 Z" fill="#000"/></svg>
<svg class="a" style="left:85px;top:290px;" width="10" height="10" viewBox="0 0 10 10"><path d="M9.4,1.9 H2.4 Q1.6,1.9 1.6,2.7 V4.7 Q1.6,5.4 2.4,5.4 H8.2 Q8.9,5.4 8.9,6.2 V8.1 H1" fill="none" stroke="#000" stroke-width="1.8"/></svg>
<div class="t" style="left:106px;top:288.50px;font-size:13px;line-height:13px;color:#f6f6f6;font-weight:700;">רות רוזן (D)</div>
<div class="a" style="left:58px;top:307px;width:16px;height:16px;background:#292c30;border:1px solid #2f3236;border-radius:3px;"></div>
<div class="a" style="left:106px;top:307px;width:46px;height:15px;background:#56585c;border-radius:3px;"></div>
<svg class="a" style="left:112px;top:310px;" width="10" height="10" viewBox="0 0 10 10"><circle cx="5" cy="5" r="4.1" fill="#000"/></svg>
<svg class="a" style="left:138px;top:310px;" width="7" height="10" viewBox="0 0 7 10"><path d="M1,3 H3 L6,0.7 V9.3 L3,7 H1 Z" fill="#000"/></svg>
<div class="a" style="left:156px;top:307px;width:46px;height:15px;background:#56585c;border-radius:3px;"></div>
<svg class="a" style="left:161px;top:310px;" width="11" height="10" viewBox="0 0 11 10"><path d="M1.6,6.4 L9.2,3.4 A4.1,4.1 0 1 0 9,7.6" fill="none" stroke="#000" stroke-width="1.4"/></svg>
<svg class="a" style="left:184px;top:311px;" width="10" height="9" viewBox="0 0 10 9"><circle cx="5" cy="4.5" r="2.5" fill="none" stroke="#000" stroke-width="1.2"/></svg>
<div class="a" style="left:206px;top:307px;width:46px;height:15px;background:#56585c;border-radius:3px;"></div>
<svg class="a" style="left:212px;top:310px;" width="9" height="10" viewBox="0 0 9 10"><path d="M1.2,9.6 V1.2 H6.8 Q7.9,1.2 7.9,2.3 V4.4 Q7.9,5.4 6.8,5.4 H1.2 M5.4,5.4 L8.2,9.6" fill="none" stroke="#000" stroke-width="1.8"/></svg>
<svg class="a" style="left:236px;top:310px;" width="10" height="10" viewBox="0 0 10 10"><path d="M1.6,0.6 V8.5 H8.4 V0.6 M5,0.6 V8.5" fill="none" stroke="#000" stroke-width="1.8"/></svg>
<div class="a" style="left:256px;top:307px;width:21px;height:15px;background:#56585c;border-radius:3px;"></div>
<svg class="a" style="left:259px;top:311px;" width="16" height="9" viewBox="0 0 16 9"><rect x="0.9" y="0.9" width="13.6" height="6.4" fill="none" stroke="#000" stroke-width="1.3"/><path d="M5.4,1 V7.2 M9.9,1 V7.2" stroke="#000" stroke-width="1.3"/></svg>
<div class="a" style="left:11px;top:326px;width:40px;height:41px;background:#d6e63a;border-radius:0px;"></div>
<svg class="a" style="left:12px;top:328px;" width="19" height="15" viewBox="0 0 19 15"><path d="M0,8.5 H19" stroke="#fff" stroke-width="1.2"/><path d="M3.5,6 V11 M5.5,5 V12 M7.5,3 V13 M9.5,1 V15 M11.5,4 V13 M13.5,6 V11 M15.5,7 V10" stroke="#fff" stroke-width="1.3"/></svg>
<div class="t" style="left:-553px;width:600px;text-align:right;top:331.96px;font-size:9.5px;line-height:9.5px;color:#3a4010;font-weight:400;">5</div>
<div class="a" style="left:58px;top:329px;width:43px;height:15px;background:#56585c;border-radius:3px;"></div>
<div class="a" style="left:79px;top:329px;width:1px;height:15px;background:#2f3236;border-radius:0px;"></div>
<svg class="a" style="left:64px;top:332px;" width="10" height="10" viewBox="0 0 10 10"><path d="M1,1 H8 Q9.2,1 9.2,2.2 V9 H7.6 V2.6 H5.9 V9 H4.3 V2.6 H2.6 V9 H1 Z" fill="#000"/></svg>
<svg class="a" style="left:85px;top:332px;" width="10" height="10" viewBox="0 0 10 10"><path d="M9.4,1.9 H2.4 Q1.6,1.9 1.6,2.7 V4.7 Q1.6,5.4 2.4,5.4 H8.2 Q8.9,5.4 8.9,6.2 V8.1 H1" fill="none" stroke="#000" stroke-width="1.8"/></svg>
<div class="t" style="left:106px;top:330.50px;font-size:13px;line-height:13px;color:#f6f6f6;font-weight:700;">רות רוזן (D)</div>
<div class="a" style="left:58px;top:349px;width:16px;height:16px;background:#292c30;border:1px solid #2f3236;border-radius:3px;"></div>
<div class="a" style="left:106px;top:349px;width:46px;height:15px;background:#56585c;border-radius:3px;"></div>
<svg class="a" style="left:112px;top:352px;" width="10" height="10" viewBox="0 0 10 10"><circle cx="5" cy="5" r="4.1" fill="#000"/></svg>
<svg class="a" style="left:138px;top:352px;" width="7" height="10" viewBox="0 0 7 10"><path d="M1,3 H3 L6,0.7 V9.3 L3,7 H1 Z" fill="#000"/></svg>
<div class="a" style="left:156px;top:349px;width:46px;height:15px;background:#56585c;border-radius:3px;"></div>
<svg class="a" style="left:161px;top:352px;" width="11" height="10" viewBox="0 0 11 10"><path d="M1.6,6.4 L9.2,3.4 A4.1,4.1 0 1 0 9,7.6" fill="none" stroke="#000" stroke-width="1.4"/></svg>
<svg class="a" style="left:184px;top:353px;" width="10" height="9" viewBox="0 0 10 9"><circle cx="5" cy="4.5" r="2.5" fill="none" stroke="#000" stroke-width="1.2"/></svg>
<div class="a" style="left:206px;top:349px;width:46px;height:15px;background:#56585c;border-radius:3px;"></div>
<svg class="a" style="left:212px;top:352px;" width="9" height="10" viewBox="0 0 9 10"><path d="M1.2,9.6 V1.2 H6.8 Q7.9,1.2 7.9,2.3 V4.4 Q7.9,5.4 6.8,5.4 H1.2 M5.4,5.4 L8.2,9.6" fill="none" stroke="#000" stroke-width="1.8"/></svg>
<svg class="a" style="left:236px;top:352px;" width="10" height="10" viewBox="0 0 10 10"><path d="M1.6,0.6 V8.5 H8.4 V0.6 M5,0.6 V8.5" fill="none" stroke="#000" stroke-width="1.8"/></svg>
<div class="a" style="left:256px;top:349px;width:21px;height:15px;background:#56585c;border-radius:3px;"></div>
<svg class="a" style="left:259px;top:353px;" width="16" height="9" viewBox="0 0 16 9"><rect x="0.9" y="0.9" width="13.6" height="6.4" fill="none" stroke="#000" stroke-width="1.3"/><path d="M5.4,1 V7.2 M9.9,1 V7.2" stroke="#000" stroke-width="1.3"/></svg>
<div class="a" style="left:376px;top:166px;width:3px;height:31px;background:#20d0b0;border-radius:0px;"></div>
<div class="a" style="left:380px;top:166px;width:3px;height:31px;background:#20d0b0;border-radius:0px;"></div>
<svg class="a" style="left:376px;top:166px;" width="7" height="31" viewBox="0 0 7 31"><defs><linearGradient id="mg" x1="0" y1="0" x2="0" y2="1"><stop offset="0" stop-color="#3de39a"/><stop offset="1" stop-color="#17b6e8"/></linearGradient></defs><rect x="0" y="0" width="3" height="31" fill="url(#mg)"/><rect x="4" y="0" width="3" height="31" fill="url(#mg)"/></svg>
<svg class="a" style="left:347px;top:798px;" width="11" height="7" viewBox="0 0 11 7"><path d="M0,0 H11 L5.5,6 Z" fill="#8c8e92"/></svg>
<svg class="a" style="left:366px;top:796px;" width="12" height="12" viewBox="0 0 12 12"><path d="M4.74,0.38 L7.26,0.38 L7.42,1.79 L8.94,2.67 L10.24,2.10 L11.50,4.28 L10.35,5.12 L10.35,6.88 L11.50,7.72 L10.24,9.90 L8.94,9.33 L7.42,10.21 L7.26,11.62 L4.74,11.62 L4.58,10.21 L3.06,9.33 L1.76,9.90 L0.50,7.72 L1.65,6.88 L1.65,5.12 L0.50,4.28 L1.76,2.10 L3.06,2.67 L4.58,1.79 Z" fill="#8c8e92"/><circle cx="6.0" cy="6.0" r="2.04" fill="#25292c"/></svg>
<div class="t" style="left:18px;top:797.53px;font-size:10px;line-height:10px;color:#c0c0c0;font-weight:400;">-</div>
<div class="a" style="left:10px;top:760px;width:365px;height:54px;overflow:hidden">
<div class="t" style="left:-262.2px;width:600px;text-align:right;top:16.27px;font-size:20px;line-height:20px;color:#8e8f91;font-weight:400;direction:rtl;unicode-bidi:plaintext">הפעל את Windows</div>
<div class="t" style="left:-262.2px;width:600px;text-align:right;top:42.97px;font-size:14.8px;line-height:14.8px;color:#8e8f91;font-weight:400;direction:rtl">עבור אל &#39;הגדרות&#39; כדי להפעיל את Windows.</div>
</div>
<div class="a" style="left:392px;top:112px;width:1021px;height:26px;background:#17181b;border-radius:0px;"></div>
<div class="a" style="left:385px;top:138px;width:1028px;height:660px;background:#25292c;border-radius:0px;"></div>
<div class="a" style="left:392px;top:157px;width:1021px;height:1px;background:#404347;border-radius:0px;"></div>
<div class="a" style="left:392px;top:199px;width:1021px;height:1px;background:#404347;border-radius:0px;"></div>
<div class="a" style="left:392px;top:241px;width:1021px;height:1px;background:#404347;border-radius:0px;"></div>
<div class="a" style="left:392px;top:283px;width:1021px;height:1px;background:#404347;border-radius:0px;"></div>
<div class="a" style="left:392px;top:325px;width:1021px;height:1px;background:#404347;border-radius:0px;"></div>
<div class="a" style="left:392px;top:367px;width:1021px;height:1px;background:#404347;border-radius:0px;"></div>
<div class="a" style="left:392px;top:387px;width:1021px;height:1px;background:#404347;border-radius:0px;"></div>
<div class="a" style="left:398px;top:138px;width:1px;height:660px;background:#7d8084;border-radius:0px;"></div>
<div class="a" style="left:398px;top:113px;width:1px;height:25px;background:#e0e0e0;border-radius:0px;"></div>
<div class="a" style="left:412px;top:138px;width:1px;height:660px;background:#3f4246;border-radius:0px;"></div>
<div class="a" style="left:412px;top:113px;width:1px;height:9px;background:#64676b;border-radius:0px;"></div>
<div class="a" style="left:426px;top:138px;width:1px;height:660px;background:#3f4246;border-radius:0px;"></div>
<div class="a" style="left:426px;top:113px;width:1px;height:9px;background:#64676b;border-radius:0px;"></div>
<div class="a" style="left:440px;top:138px;width:1px;height:660px;background:#3f4246;border-radius:0px;"></div>
<div class="a" style="left:440px;top:113px;width:1px;height:9px;background:#64676b;border-radius:0px;"></div>
<div class="a" style="left:453px;top:138px;width:1px;height:660px;background:#3f4246;border-radius:0px;"></div>
<div class="a" style="left:453px;top:113px;width:1px;height:9px;background:#64676b;border-radius:0px;"></div>
<div class="a" style="left:467px;top:138px;width:1px;height:660px;background:#3f4246;border-radius:0px;"></div>
<div class="a" style="left:467px;top:113px;width:1px;height:9px;background:#64676b;border-radius:0px;"></div>
<div class="a" style="left:481px;top:138px;width:1px;height:660px;background:#5e6165;border-radius:0px;"></div>
<div class="a" style="left:481px;top:113px;width:1px;height:9px;background:#b8babe;border-radius:0px;"></div>
<div class="a" style="left:494px;top:138px;width:1px;height:660px;background:#3f4246;border-radius:0px;"></div>
<div class="a" style="left:494px;top:113px;width:1px;height:9px;background:#64676b;border-radius:0px;"></div>
<div class="a" style="left:508px;top:138px;width:1px;height:660px;background:#3f4246;border-radius:0px;"></div>
<div class="a" style="left:508px;top:113px;width:1px;height:9px;background:#64676b;border-radius:0px;"></div>
<div class="a" style="left:522px;top:138px;width:1px;height:660px;background:#3f4246;border-radius:0px;"></div>
<div class="a" style="left:522px;top:113px;width:1px;height:9px;background:#64676b;border-radius:0px;"></div>
<div class="a" style="left:536px;top:138px;width:1px;height:660px;background:#3f4246;border-radius:0px;"></div>
<div class="a" style="left:536px;top:113px;width:1px;height:9px;background:#64676b;border-radius:0px;"></div>
<div class="a" style="left:549px;top:138px;width:1px;height:660px;background:#3f4246;border-radius:0px;"></div>
<div class="a" style="left:549px;top:113px;width:1px;height:9px;background:#64676b;border-radius:0px;"></div>
<div class="a" style="left:563px;top:138px;width:1px;height:660px;background:#7d8084;border-radius:0px;"></div>
<div class="a" style="left:563px;top:113px;width:1px;height:25px;background:#e0e0e0;border-radius:0px;"></div>
<div class="a" style="left:577px;top:138px;width:1px;height:660px;background:#3f4246;border-radius:0px;"></div>
<div class="a" style="left:577px;top:113px;width:1px;height:9px;background:#64676b;border-radius:0px;"></div>
<div class="a" style="left:590px;top:138px;width:1px;height:660px;background:#3f4246;border-radius:0px;"></div>
<div class="a" style="left:590px;top:113px;width:1px;height:9px;background:#64676b;border-radius:0px;"></div>
<div class="a" style="left:604px;top:138px;width:1px;height:660px;background:#3f4246;border-radius:0px;"></div>
<div class="a" style="left:604px;top:113px;width:1px;height:9px;background:#64676b;border-radius:0px;"></div>
<div class="a" style="left:618px;top:138px;width:1px;height:660px;background:#3f4246;border-radius:0px;"></div>
<div class="a" style="left:618px;top:113px;width:1px;height:9px;background:#64676b;border-radius:0px;"></div>
<div class="a" style="left:631px;top:138px;width:1px;height:660px;background:#3f4246;border-radius:0px;"></div>
<div class="a" style="left:631px;top:113px;width:1px;height:9px;background:#64676b;border-radius:0px;"></div>
<div class="a" style="left:645px;top:138px;width:1px;height:660px;background:#5e6165;border-radius:0px;"></div>
<div class="a" style="left:645px;top:113px;width:1px;height:9px;background:#b8babe;border-radius:0px;"></div>
<div class="a" style="left:659px;top:138px;width:1px;height:660px;background:#3f4246;border-radius:0px;"></div>
<div class="a" style="left:659px;top:113px;width:1px;height:9px;background:#64676b;border-radius:0px;"></div>
<div class="a" style="left:673px;top:138px;width:1px;height:660px;background:#3f4246;border-radius:0px;"></div>
<div class="a" style="left:673px;top:113px;width:1px;height:9px;background:#64676b;border-radius:0px;"></div>
<div class="a" style="left:686px;top:138px;width:1px;height:660px;background:#3f4246;border-radius:0px;"></div>
<div class="a" style="left:686px;top:113px;width:1px;height:9px;background:#64676b;border-radius:0px;"></div>
<div class="a" style="left:700px;top:138px;width:1px;height:660px;background:#3f4246;border-radius:0px;"></div>
<div class="a" style="left:700px;top:113px;width:1px;height:9px;background:#64676b;border-radius:0px;"></div>
<div class="a" style="left:714px;top:138px;width:1px;height:660px;background:#3f4246;border-radius:0px;"></div>
<div class="a" style="left:714px;top:113px;width:1px;height:9px;background:#64676b;border-radius:0px;"></div>
<div class="a" style="left:727px;top:138px;width:1px;height:660px;background:#7d8084;border-radius:0px;"></div>
<div class="a" style="left:727px;top:113px;width:1px;height:25px;background:#e0e0e0;border-radius:0px;"></div>
<div class="a" style="left:741px;top:138px;width:1px;height:660px;background:#3f4246;border-radius:0px;"></div>
<div class="a" style="left:741px;top:113px;width:1px;height:9px;background:#64676b;border-radius:0px;"></div>
<div class="a" style="left:755px;top:138px;width:1px;height:660px;background:#3f4246;border-radius:0px;"></div>
<div class="a" style="left:755px;top:113px;width:1px;height:9px;background:#64676b;border-radius:0px;"></div>
<div class="a" style="left:768px;top:138px;width:1px;height:660px;background:#3f4246;border-radius:0px;"></div>
<div class="a" style="left:768px;top:113px;width:1px;height:9px;background:#64676b;border-radius:0px;"></div>
<div class="a" style="left:782px;top:138px;width:1px;height:660px;background:#3f4246;border-radius:0px;"></div>
<div class="a" style="left:782px;top:113px;width:1px;height:9px;background:#64676b;border-radius:0px;"></div>
<div class="a" style="left:796px;top:138px;width:1px;height:660px;background:#3f4246;border-radius:0px;"></div>
<div class="a" style="left:796px;top:113px;width:1px;height:9px;background:#64676b;border-radius:0px;"></div>
<div class="a" style="left:810px;top:138px;width:1px;height:660px;background:#5e6165;border-radius:0px;"></div>
<div class="a" style="left:810px;top:113px;width:1px;height:9px;background:#b8babe;border-radius:0px;"></div>
<div class="a" style="left:823px;top:138px;width:1px;height:660px;background:#3f4246;border-radius:0px;"></div>
<div class="a" style="left:823px;top:113px;width:1px;height:9px;background:#64676b;border-radius:0px;"></div>
<div class="a" style="left:837px;top:138px;width:1px;height:660px;background:#3f4246;border-radius:0px;"></div>
<div class="a" style="left:837px;top:113px;width:1px;height:9px;background:#64676b;border-radius:0px;"></div>
<div class="a" style="left:851px;top:138px;width:1px;height:660px;background:#3f4246;border-radius:0px;"></div>
<div class="a" style="left:851px;top:113px;width:1px;height:9px;background:#64676b;border-radius:0px;"></div>
<div class="a" style="left:864px;top:138px;width:1px;height:660px;background:#3f4246;border-radius:0px;"></div>
<div class="a" style="left:864px;top:113px;width:1px;height:9px;background:#64676b;border-radius:0px;"></div>
<div class="a" style="left:878px;top:138px;width:1px;height:660px;background:#3f4246;border-radius:0px;"></div>
<div class="a" style="left:878px;top:113px;width:1px;height:9px;background:#64676b;border-radius:0px;"></div>
<div class="a" style="left:892px;top:138px;width:1px;height:660px;background:#7d8084;border-radius:0px;"></div>
<div class="a" style="left:892px;top:113px;width:1px;height:25px;background:#e0e0e0;border-radius:0px;"></div>
<div class="a" style="left:905px;top:138px;width:1px;height:660px;background:#3f4246;border-radius:0px;"></div>
<div class="a" style="left:905px;top:113px;width:1px;height:9px;background:#64676b;border-radius:0px;"></div>
<div class="a" style="left:919px;top:138px;width:1px;height:660px;background:#3f4246;border-radius:0px;"></div>
<div class="a" style="left:919px;top:113px;width:1px;height:9px;background:#64676b;border-radius:0px;"></div>
<div class="a" style="left:933px;top:138px;width:1px;height:660px;background:#3f4246;border-radius:0px;"></div>
<div class="a" style="left:933px;top:113px;width:1px;height:9px;background:#64676b;border-radius:0px;"></div>
<div class="a" style="left:947px;top:138px;width:1px;height:660px;background:#3f4246;border-radius:0px;"></div>
<div class="a" style="left:947px;top:113px;width:1px;height:9px;background:#64676b;border-radius:0px;"></div>
<div class="a" style="left:960px;top:138px;width:1px;height:660px;background:#3f4246;border-radius:0px;"></div>
<div class="a" style="left:960px;top:113px;width:1px;height:9px;background:#64676b;border-radius:0px;"></div>
<div class="a" style="left:974px;top:138px;width:1px;height:660px;background:#5e6165;border-radius:0px;"></div>
<div class="a" style="left:974px;top:113px;width:1px;height:9px;background:#b8babe;border-radius:0px;"></div>
<div class="a" style="left:988px;top:138px;width:1px;height:660px;background:#3f4246;border-radius:0px;"></div>
<div class="a" style="left:988px;top:113px;width:1px;height:9px;background:#64676b;border-radius:0px;"></div>
<div class="a" style="left:1001px;top:138px;width:1px;height:660px;background:#3f4246;border-radius:0px;"></div>
<div class="a" style="left:1001px;top:113px;width:1px;height:9px;background:#64676b;border-radius:0px;"></div>
<div class="a" style="left:1015px;top:138px;width:1px;height:660px;background:#3f4246;border-radius:0px;"></div>
<div class="a" style="left:1015px;top:113px;width:1px;height:9px;background:#64676b;border-radius:0px;"></div>
<div class="a" style="left:1029px;top:138px;width:1px;height:660px;background:#3f4246;border-radius:0px;"></div>
<div class="a" style="left:1029px;top:113px;width:1px;height:9px;background:#64676b;border-radius:0px;"></div>
<div class="a" style="left:1042px;top:138px;width:1px;height:660px;background:#3f4246;border-radius:0px;"></div>
<div class="a" style="left:1042px;top:113px;width:1px;height:9px;background:#64676b;border-radius:0px;"></div>
<div class="a" style="left:1056px;top:138px;width:1px;height:660px;background:#7d8084;border-radius:0px;"></div>
<div class="a" style="left:1056px;top:113px;width:1px;height:25px;background:#e0e0e0;border-radius:0px;"></div>
<div class="a" style="left:1070px;top:138px;width:1px;height:660px;background:#3f4246;border-radius:0px;"></div>
<div class="a" style="left:1070px;top:113px;width:1px;height:9px;background:#64676b;border-radius:0px;"></div>
<div class="a" style="left:1084px;top:138px;width:1px;height:660px;background:#3f4246;border-radius:0px;"></div>
<div class="a" style="left:1084px;top:113px;width:1px;height:9px;background:#64676b;border-radius:0px;"></div>
<div class="a" style="left:1097px;top:138px;width:1px;height:660px;background:#3f4246;border-radius:0px;"></div>
<div class="a" style="left:1097px;top:113px;width:1px;height:9px;background:#64676b;border-radius:0px;"></div>
<div class="a" style="left:1111px;top:138px;width:1px;height:660px;background:#3f4246;border-radius:0px;"></div>
<div class="a" style="left:1111px;top:113px;width:1px;height:9px;background:#64676b;border-radius:0px;"></div>
<div class="a" style="left:1125px;top:138px;width:1px;height:660px;background:#3f4246;border-radius:0px;"></div>
<div class="a" style="left:1125px;top:113px;width:1px;height:9px;background:#64676b;border-radius:0px;"></div>
<div class="a" style="left:1138px;top:138px;width:1px;height:660px;background:#5e6165;border-radius:0px;"></div>
<div class="a" style="left:1138px;top:113px;width:1px;height:9px;background:#b8babe;border-radius:0px;"></div>
<div class="a" style="left:1152px;top:138px;width:1px;height:660px;background:#3f4246;border-radius:0px;"></div>
<div class="a" style="left:1152px;top:113px;width:1px;height:9px;background:#64676b;border-radius:0px;"></div>
<div class="a" style="left:1166px;top:138px;width:1px;height:660px;background:#3f4246;border-radius:0px;"></div>
<div class="a" style="left:1166px;top:113px;width:1px;height:9px;background:#64676b;border-radius:0px;"></div>
<div class="a" style="left:1179px;top:138px;width:1px;height:660px;background:#3f4246;border-radius:0px;"></div>
<div class="a" style="left:1179px;top:113px;width:1px;height:9px;background:#64676b;border-radius:0px;"></div>
<div class="a" style="left:1193px;top:138px;width:1px;height:660px;background:#3f4246;border-radius:0px;"></div>
<div class="a" style="left:1193px;top:113px;width:1px;height:9px;background:#64676b;border-radius:0px;"></div>
<div class="a" style="left:1207px;top:138px;width:1px;height:660px;background:#3f4246;border-radius:0px;"></div>
<div class="a" style="left:1207px;top:113px;width:1px;height:9px;background:#64676b;border-radius:0px;"></div>
<div class="a" style="left:1221px;top:138px;width:1px;height:660px;background:#7d8084;border-radius:0px;"></div>
<div class="a" style="left:1221px;top:113px;width:1px;height:25px;background:#e0e0e0;border-radius:0px;"></div>
<div class="a" style="left:1234px;top:138px;width:1px;height:660px;background:#3f4246;border-radius:0px;"></div>
<div class="a" style="left:1234px;top:113px;width:1px;height:9px;background:#64676b;border-radius:0px;"></div>
<div class="a" style="left:1248px;top:138px;width:1px;height:660px;background:#3f4246;border-radius:0px;"></div>
<div class="a" style="left:1248px;top:113px;width:1px;height:9px;background:#64676b;border-radius:0px;"></div>
<div class="a" style="left:1262px;top:138px;width:1px;height:660px;background:#3f4246;border-radius:0px;"></div>
<div class="a" style="left:1262px;top:113px;width:1px;height:9px;background:#64676b;border-radius:0px;"></div>
<div class="a" style="left:1275px;top:138px;width:1px;height:660px;background:#3f4246;border-radius:0px;"></div>
<div class="a" style="left:1275px;top:113px;width:1px;height:9px;background:#64676b;border-radius:0px;"></div>
<div class="a" style="left:1289px;top:138px;width:1px;height:660px;background:#3f4246;border-radius:0px;"></div>
<div class="a" style="left:1289px;top:113px;width:1px;height:9px;background:#64676b;border-radius:0px;"></div>
<div class="a" style="left:1303px;top:138px;width:1px;height:660px;background:#5e6165;border-radius:0px;"></div>
<div class="a" style="left:1303px;top:113px;width:1px;height:9px;background:#b8babe;border-radius:0px;"></div>
<div class="a" style="left:1317px;top:138px;width:1px;height:660px;background:#3f4246;border-radius:0px;"></div>
<div class="a" style="left:1317px;top:113px;width:1px;height:9px;background:#64676b;border-radius:0px;"></div>
<div class="a" style="left:1330px;top:138px;width:1px;height:660px;background:#3f4246;border-radius:0px;"></div>
<div class="a" style="left:1330px;top:113px;width:1px;height:9px;background:#64676b;border-radius:0px;"></div>
<div class="a" style="left:1344px;top:138px;width:1px;height:660px;background:#3f4246;border-radius:0px;"></div>
<div class="a" style="left:1344px;top:113px;width:1px;height:9px;background:#64676b;border-radius:0px;"></div>
<div class="a" style="left:1358px;top:138px;width:1px;height:660px;background:#3f4246;border-radius:0px;"></div>
<div class="a" style="left:1358px;top:113px;width:1px;height:9px;background:#64676b;border-radius:0px;"></div>
<div class="a" style="left:1371px;top:138px;width:1px;height:660px;background:#3f4246;border-radius:0px;"></div>
<div class="a" style="left:1371px;top:113px;width:1px;height:9px;background:#64676b;border-radius:0px;"></div>
<div class="a" style="left:1385px;top:138px;width:1px;height:660px;background:#7d8084;border-radius:0px;"></div>
<div class="a" style="left:1385px;top:113px;width:1px;height:25px;background:#e0e0e0;border-radius:0px;"></div>
<div class="a" style="left:1399px;top:138px;width:1px;height:660px;background:#3f4246;border-radius:0px;"></div>
<div class="a" style="left:1399px;top:113px;width:1px;height:9px;background:#64676b;border-radius:0px;"></div>
<div class="a" style="left:1412px;top:138px;width:1px;height:660px;background:#3f4246;border-radius:0px;"></div>
<div class="a" style="left:1412px;top:113px;width:1px;height:9px;background:#64676b;border-radius:0px;"></div>
<div class="t" style="left:403px;top:124.69px;font-size:11px;line-height:11px;color:#f2f2f2;font-weight:400;">0</div>
<div class="t" style="left:568px;top:124.69px;font-size:11px;line-height:11px;color:#f2f2f2;font-weight:400;">1:00</div>
<div class="t" style="left:732px;top:124.69px;font-size:11px;line-height:11px;color:#f2f2f2;font-weight:400;">2:00</div>
<div class="t" style="left:897px;top:124.69px;font-size:11px;line-height:11px;color:#f2f2f2;font-weight:400;">3:00</div>
<div class="t" style="left:1061px;top:124.69px;font-size:11px;line-height:11px;color:#f2f2f2;font-weight:400;">4:00</div>
<div class="t" style="left:1226px;top:124.69px;font-size:11px;line-height:11px;color:#f2f2f2;font-weight:400;">5:00</div>
<div class="t" style="left:1390px;top:124.69px;font-size:11px;line-height:11px;color:#f2f2f2;font-weight:400;">6:00</div>
<svg class="a" style="left:391px;top:113px;" width="15" height="11" viewBox="0 0 15 11"><path d="M0,0 H15 L7.5,10 Z" fill="#fff"/></svg>
<div class="a" style="left:398px;top:113px;width:1px;height:25px;background:#fff;border-radius:0px;"></div>
<div class="a" style="left:398px;top:159px;width:560px;height:39px;background:#2a0808;border-radius:0px;"></div>
<div class="a" style="left:399px;top:160px;width:558px;height:37px;background:#d84848;border-radius:0px;"></div>
<div class="a" style="left:400px;top:161px;width:556px;height:35px;background:#e23535;border-radius:0px;"></div>
<svg class="a" style="left:400px;top:161px;" width="556" height="35" viewBox="0 0 556 35"><rect x="0" y="-0.2" width="1" height="8.1" fill="#2a1212"/><rect x="0" y="10.1" width="1" height="8.1" fill="#2a1212"/><rect x="0" y="18.2" width="1" height="7.7" fill="#2a1212"/><rect x="0" y="28.1" width="1" height="7.7" fill="#2a1212"/><rect x="1" y="-0.2" width="1" height="8.1" fill="#2a1212"/><rect x="1" y="10.1" width="1" height="8.1" fill="#2a1212"/><rect x="1" y="18.2" width="1" height="7.7" fill="#2a1212"/><rect x="1" y="28.1" width="1" height="7.7" fill="#2a1212"/><rect x="2" y="-0.2" width="1" height="8.1" fill="#2a1212"/><rect x="2" y="10.1" width="1" height="8.1" fill="#2a1212"/><rect x="2" y="18.2" width="1" height="7.7" fill="#2a1212"/><rect x="2" y="28.1" width="1" height="7.7" fill="#2a1212"/><rect x="3" y="-0.2" width="1" height="8.1" fill="#2a1212"/><rect x="3" y="10.1" width="1" height="8.1" fill="#2a1212"/><rect x="3" y="18.2" width="1" height="7.7" fill="#2a1212"/><rect x="3" y="28.1" width="1" height="7.7" fill="#2a1212"/><rect x="4" y="-0.2" width="1" height="8.1" fill="#2a1212"/><rect x="4" y="10.1" width="1" height="8.1" fill="#2a1212"/><rect x="4" y="18.2" width="1" height="7.7" fill="#2a1212"/><rect x="4" y="28.1" width="1" height="7.7" fill="#2a1212"/><rect x="5" y="-0.2" width="1" height="8.1" fill="#2a1212"/><rect x="5" y="10.1" width="1" height="8.1" fill="#2a1212"/><rect x="5" y="18.2" width="1" height="7.7" fill="#2a1212"/><rect x="5" y="28.1" width="1" height="7.7" fill="#2a1212"/><rect x="6" y="-0.2" width="1" height="8.1" fill="#2a1212"/><rect x="6" y="10.1" width="1" height="8.1" fill="#2a1212"/><rect x="6" y="18.2" width="1" height="7.7" fill="#2a1212"/><rect x="6" y="28.1" width="1" height="7.7" fill="#2a1212"/><rect x="7" y="-0.2" width="1" height="2.8" fill="#2a1212"/><rect x="7" y="15.5" width="1" height="2.8" fill="#2a1212"/><rect x="7" y="18.2" width="1" height="2.6" fill="#2a1212"/><rect x="7" y="33.1" width="1" height="2.6" fill="#2a1212"/><rect x="8" y="-0.2" width="1" height="3.7" fill="#2a1212"/><rect x="8" y="14.6" width="1" height="3.7" fill="#2a1212"/><rect x="8" y="18.2" width="1" height="3.5" fill="#2a1212"/><rect x="8" y="32.2" width="1" height="3.5" fill="#2a1212"/><rect x="9" y="-0.2" width="1" height="1.8" fill="#2a1212"/><rect x="9" y="16.4" width="1" height="1.8" fill="#2a1212"/><rect x="9" y="18.2" width="1" height="1.7" fill="#2a1212"/><rect x="9" y="34.0" width="1" height="1.7" fill="#2a1212"/><rect x="11" y="-0.2" width="1" height="5.1" fill="#2a1212"/><rect x="11" y="13.2" width="1" height="5.1" fill="#2a1212"/><rect x="11" y="18.2" width="1" height="4.8" fill="#2a1212"/><rect x="11" y="30.9" width="1" height="4.8" fill="#2a1212"/><rect x="12" y="-0.2" width="1" height="5.1" fill="#2a1212"/><rect x="12" y="13.2" width="1" height="5.1" fill="#2a1212"/><rect x="12" y="18.2" width="1" height="4.8" fill="#2a1212"/><rect x="12" y="30.9" width="1" height="4.8" fill="#2a1212"/><rect x="14" y="-0.2" width="1" height="0.9" fill="#2a1212"/><rect x="14" y="17.3" width="1" height="0.9" fill="#2a1212"/><rect x="14" y="18.2" width="1" height="0.9" fill="#2a1212"/><rect x="14" y="34.9" width="1" height="0.9" fill="#2a1212"/><rect x="15" y="-0.2" width="1" height="5.1" fill="#2a1212"/><rect x="15" y="13.2" width="1" height="5.1" fill="#2a1212"/><rect x="15" y="18.2" width="1" height="4.8" fill="#2a1212"/><rect x="15" y="30.9" width="1" height="4.8" fill="#2a1212"/><rect x="16" y="-0.2" width="1" height="2.8" fill="#2a1212"/><rect x="16" y="15.5" width="1" height="2.8" fill="#2a1212"/><rect x="16" y="18.2" width="1" height="2.6" fill="#2a1212"/><rect x="16" y="33.1" width="1" height="2.6" fill="#2a1212"/><rect x="17" y="-0.2" width="1" height="0.9" fill="#2a1212"/><rect x="17" y="17.3" width="1" height="0.9" fill="#2a1212"/><rect x="17" y="18.2" width="1" height="0.9" fill="#2a1212"/><rect x="17" y="34.9" width="1" height="0.9" fill="#2a1212"/><rect x="18" y="-0.2" width="1" height="5.1" fill="#2a1212"/><rect x="18" y="13.2" width="1" height="5.1" fill="#2a1212"/><rect x="18" y="18.2" width="1" height="4.8" fill="#2a1212"/><rect x="18" y="30.9" width="1" height="4.8" fill="#2a1212"/><rect x="19" y="-0.2" width="1" height="0.9" fill="#2a1212"/><rect x="19" y="17.3" width="1" height="0.9" fill="#2a1212"/><rect x="19" y="18.2" width="1" height="0.9" fill="#2a1212"/><rect x="19" y="34.9" width="1" height="0.9" fill="#2a1212"/><rect x="20" y="-0.2" width="1" height="3.7" fill="#2a1212"/><rect x="20" y="14.6" width="1" height="3.7" fill="#2a1212"/><rect x="20" y="18.2" width="1" height="3.5" fill="#2a1212"/><rect x="20" y="32.2" width="1" height="3.5" fill="#2a1212"/><rect x="21" y="-0.2" width="1" height="5.1" fill="#2a1212"/><rect x="21" y="13.2" width="1" height="5.1" fill="#2a1212"/><rect x="21" y="18.2" width="1" height="4.8" fill="#2a1212"/><rect x="21" y="30.9" width="1" height="4.8" fill="#2a1212"/><rect x="22" y="-0.2" width="1" height="5.1" fill="#2a1212"/><rect x="22" y="13.2" width="1" height="5.1" fill="#2a1212"/><rect x="22" y="18.2" width="1" height="4.8" fill="#2a1212"/><rect x="22" y="30.9" width="1" height="4.8" fill="#2a1212"/><rect x="23" y="-0.2" width="1" height="1.8" fill="#2a1212"/><rect x="23" y="16.4" width="1" height="1.8" fill="#2a1212"/><rect x="23" y="18.2" width="1" height="1.7" fill="#2a1212"/><rect x="23" y="34.0" width="1" height="1.7" fill="#2a1212"/><rect x="24" y="-0.2" width="1" height="1.8" fill="#2a1212"/><rect x="24" y="16.4" width="1" height="1.8" fill="#2a1212"/><rect x="24" y="18.2" width="1" height="1.7" fill="#2a1212"/><rect x="24" y="34.0" width="1" height="1.7" fill="#2a1212"/><rect x="25" y="-0.2" width="1" height="5.1" fill="#2a1212"/><rect x="25" y="13.2" width="1" height="5.1" fill="#2a1212"/><rect x="25" y="18.2" width="1" height="4.8" fill="#2a1212"/><rect x="25" y="30.9" width="1" height="4.8" fill="#2a1212"/><rect x="26" y="-0.2" width="1" height="3.7" fill="#2a1212"/><rect x="26" y="14.6" width="1" height="3.7" fill="#2a1212"/><rect x="26" y="18.2" width="1" height="3.5" fill="#2a1212"/><rect x="26" y="32.2" width="1" height="3.5" fill="#2a1212"/><rect x="27" y="-0.2" width="1" height="5.1" fill="#2a1212"/><rect x="27" y="13.2" width="1" height="5.1" fill="#2a1212"/><rect x="27" y="18.2" width="1" height="4.8" fill="#2a1212"/><rect x="27" y="30.9" width="1" height="4.8" fill="#2a1212"/><rect x="28" y="-0.2" width="1" height="0.9" fill="#2a1212"/><rect x="28" y="17.3" width="1" height="0.9" fill="#2a1212"/><rect x="28" y="18.2" width="1" height="0.9" fill="#2a1212"/><rect x="28" y="34.9" width="1" height="0.9" fill="#2a1212"/><rect x="29" y="-0.2" width="1" height="1.8" fill="#2a1212"/><rect x="29" y="16.4" width="1" height="1.8" fill="#2a1212"/><rect x="29" y="18.2" width="1" height="1.7" fill="#2a1212"/><rect x="29" y="34.0" width="1" height="1.7" fill="#2a1212"/><rect x="30" y="-0.2" width="1" height="5.1" fill="#2a1212"/><rect x="30" y="13.2" width="1" height="5.1" fill="#2a1212"/><rect x="30" y="18.2" width="1" height="4.8" fill="#2a1212"/><rect x="30" y="30.9" width="1" height="4.8" fill="#2a1212"/><rect x="474" y="-0.2" width="1" height="0.9" fill="#2a1212"/><rect x="474" y="17.3" width="1" height="0.9" fill="#2a1212"/><rect x="474" y="18.2" width="1" height="0.9" fill="#2a1212"/><rect x="474" y="34.9" width="1" height="0.9" fill="#2a1212"/><rect x="475" y="-0.2" width="1" height="1.8" fill="#2a1212"/><rect x="475" y="16.4" width="1" height="1.8" fill="#2a1212"/><rect x="475" y="18.2" width="1" height="1.7" fill="#2a1212"/><rect x="475" y="34.0" width="1" height="1.7" fill="#2a1212"/><rect x="476" y="-0.2" width="1" height="2.8" fill="#2a1212"/><rect x="476" y="15.5" width="1" height="2.8" fill="#2a1212"/><rect x="476" y="18.2" width="1" height="2.6" fill="#2a1212"/><rect x="476" y="33.1" width="1" height="2.6" fill="#2a1212"/><rect x="477" y="-0.2" width="1" height="5.1" fill="#2a1212"/><rect x="477" y="13.1" width="1" height="5.1" fill="#2a1212"/><rect x="477" y="18.2" width="1" height="4.8" fill="#2a1212"/><rect x="477" y="30.9" width="1" height="4.8" fill="#2a1212"/><rect x="478" y="-0.2" width="1" height="3.9" fill="#2a1212"/><rect x="478" y="14.4" width="1" height="3.9" fill="#2a1212"/><rect x="478" y="18.2" width="1" height="3.7" fill="#2a1212"/><rect x="478" y="32.1" width="1" height="3.7" fill="#2a1212"/><rect x="479" y="-0.2" width="1" height="4.9" fill="#2a1212"/><rect x="479" y="13.4" width="1" height="4.9" fill="#2a1212"/><rect x="479" y="18.2" width="1" height="4.6" fill="#2a1212"/><rect x="479" y="31.1" width="1" height="4.6" fill="#2a1212"/><rect x="480" y="-0.2" width="1" height="5.1" fill="#2a1212"/><rect x="480" y="13.2" width="1" height="5.1" fill="#2a1212"/><rect x="480" y="18.2" width="1" height="4.8" fill="#2a1212"/><rect x="480" y="31.0" width="1" height="4.8" fill="#2a1212"/><rect x="481" y="-0.2" width="1" height="6.7" fill="#2a1212"/><rect x="481" y="11.5" width="1" height="6.7" fill="#2a1212"/><rect x="481" y="18.2" width="1" height="6.4" fill="#2a1212"/><rect x="481" y="29.4" width="1" height="6.4" fill="#2a1212"/><rect x="482" y="-0.2" width="1" height="5.0" fill="#2a1212"/><rect x="482" y="13.2" width="1" height="5.0" fill="#2a1212"/><rect x="482" y="18.2" width="1" height="4.8" fill="#2a1212"/><rect x="482" y="31.0" width="1" height="4.8" fill="#2a1212"/><rect x="483" y="-0.2" width="1" height="6.8" fill="#2a1212"/><rect x="483" y="11.5" width="1" height="6.8" fill="#2a1212"/><rect x="483" y="18.2" width="1" height="6.4" fill="#2a1212"/><rect x="483" y="29.3" width="1" height="6.4" fill="#2a1212"/><rect x="484" y="-0.2" width="1" height="6.2" fill="#2a1212"/><rect x="484" y="12.0" width="1" height="6.2" fill="#2a1212"/><rect x="484" y="18.2" width="1" height="5.9" fill="#2a1212"/><rect x="484" y="29.9" width="1" height="5.9" fill="#2a1212"/><rect x="485" y="-0.2" width="1" height="5.1" fill="#2a1212"/><rect x="485" y="13.1" width="1" height="5.1" fill="#2a1212"/><rect x="485" y="18.2" width="1" height="4.9" fill="#2a1212"/><rect x="485" y="30.9" width="1" height="4.9" fill="#2a1212"/><rect x="486" y="-0.2" width="1" height="6.5" fill="#2a1212"/><rect x="486" y="11.7" width="1" height="6.5" fill="#2a1212"/><rect x="486" y="18.2" width="1" height="6.2" fill="#2a1212"/><rect x="486" y="29.6" width="1" height="6.2" fill="#2a1212"/><rect x="487" y="-0.2" width="1" height="5.6" fill="#2a1212"/><rect x="487" y="12.7" width="1" height="5.6" fill="#2a1212"/><rect x="487" y="18.2" width="1" height="5.3" fill="#2a1212"/><rect x="487" y="30.5" width="1" height="5.3" fill="#2a1212"/><rect x="488" y="-0.2" width="1" height="5.2" fill="#2a1212"/><rect x="488" y="13.1" width="1" height="5.2" fill="#2a1212"/><rect x="488" y="18.2" width="1" height="4.9" fill="#2a1212"/><rect x="488" y="30.8" width="1" height="4.9" fill="#2a1212"/><rect x="489" y="-0.2" width="1" height="2.3" fill="#2a1212"/><rect x="489" y="15.9" width="1" height="2.3" fill="#2a1212"/><rect x="489" y="18.2" width="1" height="2.2" fill="#2a1212"/><rect x="489" y="33.6" width="1" height="2.2" fill="#2a1212"/><rect x="490" y="-0.2" width="1" height="2.3" fill="#2a1212"/><rect x="490" y="15.9" width="1" height="2.3" fill="#2a1212"/><rect x="490" y="18.2" width="1" height="2.2" fill="#2a1212"/><rect x="490" y="33.6" width="1" height="2.2" fill="#2a1212"/><rect x="491" y="-0.2" width="1" height="5.1" fill="#2a1212"/><rect x="491" y="13.2" width="1" height="5.1" fill="#2a1212"/><rect x="491" y="18.2" width="1" height="4.8" fill="#2a1212"/><rect x="491" y="30.9" width="1" height="4.8" fill="#2a1212"/><rect x="492" y="-0.2" width="1" height="5.1" fill="#2a1212"/><rect x="492" y="13.1" width="1" height="5.1" fill="#2a1212"/><rect x="492" y="18.2" width="1" height="4.8" fill="#2a1212"/><rect x="492" y="30.9" width="1" height="4.8" fill="#2a1212"/><rect x="493" y="-0.2" width="1" height="4.7" fill="#2a1212"/><rect x="493" y="13.5" width="1" height="4.7" fill="#2a1212"/><rect x="493" y="18.2" width="1" height="4.5" fill="#2a1212"/><rect x="493" y="31.3" width="1" height="4.5" fill="#2a1212"/><rect x="494" y="-0.2" width="1" height="6.6" fill="#2a1212"/><rect x="494" y="11.6" width="1" height="6.6" fill="#2a1212"/><rect x="494" y="18.2" width="1" height="6.2" fill="#2a1212"/><rect x="494" y="29.5" width="1" height="6.2" fill="#2a1212"/><rect x="495" y="-0.2" width="1" height="5.1" fill="#2a1212"/><rect x="495" y="13.2" width="1" height="5.1" fill="#2a1212"/><rect x="495" y="18.2" width="1" height="4.8" fill="#2a1212"/><rect x="495" y="30.9" width="1" height="4.8" fill="#2a1212"/><rect x="496" y="-0.2" width="1" height="6.3" fill="#2a1212"/><rect x="496" y="11.9" width="1" height="6.3" fill="#2a1212"/><rect x="496" y="18.2" width="1" height="6.0" fill="#2a1212"/><rect x="496" y="29.8" width="1" height="6.0" fill="#2a1212"/><rect x="497" y="-0.2" width="1" height="6.6" fill="#2a1212"/><rect x="497" y="11.6" width="1" height="6.6" fill="#2a1212"/><rect x="497" y="18.2" width="1" height="6.3" fill="#2a1212"/><rect x="497" y="29.5" width="1" height="6.3" fill="#2a1212"/><rect x="498" y="-0.2" width="1" height="4.6" fill="#2a1212"/><rect x="498" y="13.6" width="1" height="4.6" fill="#2a1212"/><rect x="498" y="18.2" width="1" height="4.4" fill="#2a1212"/><rect x="498" y="31.4" width="1" height="4.4" fill="#2a1212"/><rect x="499" y="-0.2" width="1" height="5.1" fill="#2a1212"/><rect x="499" y="13.1" width="1" height="5.1" fill="#2a1212"/><rect x="499" y="18.2" width="1" height="4.8" fill="#2a1212"/><rect x="499" y="30.9" width="1" height="4.8" fill="#2a1212"/><rect x="500" y="-0.2" width="1" height="4.9" fill="#2a1212"/><rect x="500" y="13.3" width="1" height="4.9" fill="#2a1212"/><rect x="500" y="18.2" width="1" height="4.7" fill="#2a1212"/><rect x="500" y="31.1" width="1" height="4.7" fill="#2a1212"/><rect x="501" y="-0.2" width="1" height="5.3" fill="#2a1212"/><rect x="501" y="12.9" width="1" height="5.3" fill="#2a1212"/><rect x="501" y="18.2" width="1" height="5.0" fill="#2a1212"/><rect x="501" y="30.7" width="1" height="5.0" fill="#2a1212"/><rect x="502" y="-0.2" width="1" height="5.2" fill="#2a1212"/><rect x="502" y="13.0" width="1" height="5.2" fill="#2a1212"/><rect x="502" y="18.2" width="1" height="4.9" fill="#2a1212"/><rect x="502" y="30.8" width="1" height="4.9" fill="#2a1212"/><rect x="503" y="-0.2" width="1" height="4.4" fill="#2a1212"/><rect x="503" y="13.8" width="1" height="4.4" fill="#2a1212"/><rect x="503" y="18.2" width="1" height="4.2" fill="#2a1212"/><rect x="503" y="31.6" width="1" height="4.2" fill="#2a1212"/><rect x="504" y="-0.2" width="1" height="2.3" fill="#2a1212"/><rect x="504" y="15.9" width="1" height="2.3" fill="#2a1212"/><rect x="504" y="18.2" width="1" height="2.2" fill="#2a1212"/><rect x="504" y="33.6" width="1" height="2.2" fill="#2a1212"/><rect x="505" y="-0.2" width="1" height="2.3" fill="#2a1212"/><rect x="505" y="15.9" width="1" height="2.3" fill="#2a1212"/><rect x="505" y="18.2" width="1" height="2.2" fill="#2a1212"/><rect x="505" y="33.6" width="1" height="2.2" fill="#2a1212"/><rect x="506" y="-0.2" width="1" height="5.4" fill="#2a1212"/><rect x="506" y="12.8" width="1" height="5.4" fill="#2a1212"/><rect x="506" y="18.2" width="1" height="5.1" fill="#2a1212"/><rect x="506" y="30.6" width="1" height="5.1" fill="#2a1212"/><rect x="507" y="-0.2" width="1" height="3.9" fill="#2a1212"/><rect x="507" y="14.3" width="1" height="3.9" fill="#2a1212"/><rect x="507" y="18.2" width="1" height="3.7" fill="#2a1212"/><rect x="507" y="32.0" width="1" height="3.7" fill="#2a1212"/><rect x="508" y="-0.2" width="1" height="5.8" fill="#2a1212"/><rect x="508" y="12.5" width="1" height="5.8" fill="#2a1212"/><rect x="508" y="18.2" width="1" height="5.5" fill="#2a1212"/><rect x="508" y="30.3" width="1" height="5.5" fill="#2a1212"/><rect x="509" y="-0.2" width="1" height="6.1" fill="#2a1212"/><rect x="509" y="12.1" width="1" height="6.1" fill="#2a1212"/><rect x="509" y="18.2" width="1" height="5.8" fill="#2a1212"/><rect x="509" y="29.9" width="1" height="5.8" fill="#2a1212"/><rect x="510" y="-0.2" width="1" height="6.4" fill="#2a1212"/><rect x="510" y="11.9" width="1" height="6.4" fill="#2a1212"/><rect x="510" y="18.2" width="1" height="6.0" fill="#2a1212"/><rect x="510" y="29.7" width="1" height="6.0" fill="#2a1212"/><rect x="511" y="-0.2" width="1" height="4.4" fill="#2a1212"/><rect x="511" y="13.8" width="1" height="4.4" fill="#2a1212"/><rect x="511" y="18.2" width="1" height="4.2" fill="#2a1212"/><rect x="511" y="31.6" width="1" height="4.2" fill="#2a1212"/><rect x="512" y="-0.2" width="1" height="6.7" fill="#2a1212"/><rect x="512" y="11.6" width="1" height="6.7" fill="#2a1212"/><rect x="512" y="18.2" width="1" height="6.3" fill="#2a1212"/><rect x="512" y="29.4" width="1" height="6.3" fill="#2a1212"/><rect x="513" y="-0.2" width="1" height="6.0" fill="#2a1212"/><rect x="513" y="12.3" width="1" height="6.0" fill="#2a1212"/><rect x="513" y="18.2" width="1" height="5.6" fill="#2a1212"/><rect x="513" y="30.1" width="1" height="5.6" fill="#2a1212"/><rect x="514" y="-0.2" width="1" height="5.3" fill="#2a1212"/><rect x="514" y="12.9" width="1" height="5.3" fill="#2a1212"/><rect x="514" y="18.2" width="1" height="5.0" fill="#2a1212"/><rect x="514" y="30.7" width="1" height="5.0" fill="#2a1212"/><rect x="515" y="-0.2" width="1" height="5.8" fill="#2a1212"/><rect x="515" y="12.4" width="1" height="5.8" fill="#2a1212"/><rect x="515" y="18.2" width="1" height="5.5" fill="#2a1212"/><rect x="515" y="30.2" width="1" height="5.5" fill="#2a1212"/><rect x="516" y="-0.2" width="1" height="5.5" fill="#2a1212"/><rect x="516" y="12.8" width="1" height="5.5" fill="#2a1212"/><rect x="516" y="18.2" width="1" height="5.2" fill="#2a1212"/><rect x="516" y="30.6" width="1" height="5.2" fill="#2a1212"/><rect x="517" y="-0.2" width="1" height="5.0" fill="#2a1212"/><rect x="517" y="13.3" width="1" height="5.0" fill="#2a1212"/><rect x="517" y="18.2" width="1" height="4.7" fill="#2a1212"/><rect x="517" y="31.1" width="1" height="4.7" fill="#2a1212"/><rect x="518" y="-0.2" width="1" height="6.7" fill="#2a1212"/><rect x="518" y="11.5" width="1" height="6.7" fill="#2a1212"/><rect x="518" y="18.2" width="1" height="6.3" fill="#2a1212"/><rect x="518" y="29.4" width="1" height="6.3" fill="#2a1212"/><rect x="519" y="-0.2" width="1" height="5.3" fill="#2a1212"/><rect x="519" y="13.0" width="1" height="5.3" fill="#2a1212"/><rect x="519" y="18.2" width="1" height="5.0" fill="#2a1212"/><rect x="519" y="30.8" width="1" height="5.0" fill="#2a1212"/><rect x="520" y="-0.2" width="1" height="6.4" fill="#2a1212"/><rect x="520" y="11.8" width="1" height="6.4" fill="#2a1212"/><rect x="520" y="18.2" width="1" height="6.1" fill="#2a1212"/><rect x="520" y="29.7" width="1" height="6.1" fill="#2a1212"/><rect x="521" y="-0.2" width="1" height="5.8" fill="#2a1212"/><rect x="521" y="12.4" width="1" height="5.8" fill="#2a1212"/><rect x="521" y="18.2" width="1" height="5.5" fill="#2a1212"/><rect x="521" y="30.2" width="1" height="5.5" fill="#2a1212"/><rect x="522" y="-0.2" width="1" height="3.9" fill="#2a1212"/><rect x="522" y="14.3" width="1" height="3.9" fill="#2a1212"/><rect x="522" y="18.2" width="1" height="3.7" fill="#2a1212"/><rect x="522" y="32.0" width="1" height="3.7" fill="#2a1212"/><rect x="523" y="-0.2" width="1" height="2.3" fill="#2a1212"/><rect x="523" y="15.9" width="1" height="2.3" fill="#2a1212"/><rect x="523" y="18.2" width="1" height="2.2" fill="#2a1212"/><rect x="523" y="33.6" width="1" height="2.2" fill="#2a1212"/><rect x="524" y="-0.2" width="1" height="2.3" fill="#2a1212"/><rect x="524" y="15.9" width="1" height="2.3" fill="#2a1212"/><rect x="524" y="18.2" width="1" height="2.2" fill="#2a1212"/><rect x="524" y="33.6" width="1" height="2.2" fill="#2a1212"/><rect x="525" y="-0.2" width="1" height="2.3" fill="#2a1212"/><rect x="525" y="15.9" width="1" height="2.3" fill="#2a1212"/><rect x="525" y="18.2" width="1" height="2.2" fill="#2a1212"/><rect x="525" y="33.6" width="1" height="2.2" fill="#2a1212"/><rect x="526" y="-0.2" width="1" height="5.6" fill="#2a1212"/><rect x="526" y="12.7" width="1" height="5.6" fill="#2a1212"/><rect x="526" y="18.2" width="1" height="5.3" fill="#2a1212"/><rect x="526" y="30.5" width="1" height="5.3" fill="#2a1212"/><rect x="527" y="-0.2" width="1" height="3.8" fill="#2a1212"/><rect x="527" y="14.4" width="1" height="3.8" fill="#2a1212"/><rect x="527" y="18.2" width="1" height="3.6" fill="#2a1212"/><rect x="527" y="32.1" width="1" height="3.6" fill="#2a1212"/><rect x="528" y="-0.2" width="1" height="6.7" fill="#2a1212"/><rect x="528" y="11.6" width="1" height="6.7" fill="#2a1212"/><rect x="528" y="18.2" width="1" height="6.3" fill="#2a1212"/><rect x="528" y="29.4" width="1" height="6.3" fill="#2a1212"/><rect x="529" y="-0.2" width="1" height="5.1" fill="#2a1212"/><rect x="529" y="13.1" width="1" height="5.1" fill="#2a1212"/><rect x="529" y="18.2" width="1" height="4.9" fill="#2a1212"/><rect x="529" y="30.9" width="1" height="4.9" fill="#2a1212"/><rect x="530" y="-0.2" width="1" height="4.4" fill="#2a1212"/><rect x="530" y="13.9" width="1" height="4.4" fill="#2a1212"/><rect x="530" y="18.2" width="1" height="4.1" fill="#2a1212"/><rect x="530" y="31.6" width="1" height="4.1" fill="#2a1212"/><rect x="531" y="-0.2" width="1" height="4.3" fill="#2a1212"/><rect x="531" y="14.0" width="1" height="4.3" fill="#2a1212"/><rect x="531" y="18.2" width="1" height="4.1" fill="#2a1212"/><rect x="531" y="31.7" width="1" height="4.1" fill="#2a1212"/><rect x="532" y="-0.2" width="1" height="5.8" fill="#2a1212"/><rect x="532" y="12.4" width="1" height="5.8" fill="#2a1212"/><rect x="532" y="18.2" width="1" height="5.5" fill="#2a1212"/><rect x="532" y="30.2" width="1" height="5.5" fill="#2a1212"/><rect x="533" y="-0.2" width="1" height="5.8" fill="#2a1212"/><rect x="533" y="12.4" width="1" height="5.8" fill="#2a1212"/><rect x="533" y="18.2" width="1" height="5.5" fill="#2a1212"/><rect x="533" y="30.3" width="1" height="5.5" fill="#2a1212"/><rect x="534" y="-0.2" width="1" height="5.3" fill="#2a1212"/><rect x="534" y="12.9" width="1" height="5.3" fill="#2a1212"/><rect x="534" y="18.2" width="1" height="5.0" fill="#2a1212"/><rect x="534" y="30.7" width="1" height="5.0" fill="#2a1212"/><rect x="535" y="-0.2" width="1" height="4.4" fill="#2a1212"/><rect x="535" y="13.9" width="1" height="4.4" fill="#2a1212"/><rect x="535" y="18.2" width="1" height="4.1" fill="#2a1212"/><rect x="535" y="31.6" width="1" height="4.1" fill="#2a1212"/><rect x="536" y="-0.2" width="1" height="6.7" fill="#2a1212"/><rect x="536" y="11.5" width="1" height="6.7" fill="#2a1212"/><rect x="536" y="18.2" width="1" height="6.4" fill="#2a1212"/><rect x="536" y="29.4" width="1" height="6.4" fill="#2a1212"/><rect x="537" y="-0.2" width="1" height="6.6" fill="#2a1212"/><rect x="537" y="11.6" width="1" height="6.6" fill="#2a1212"/><rect x="537" y="18.2" width="1" height="6.3" fill="#2a1212"/><rect x="537" y="29.5" width="1" height="6.3" fill="#2a1212"/><rect x="538" y="-0.2" width="1" height="6.1" fill="#2a1212"/><rect x="538" y="12.2" width="1" height="6.1" fill="#2a1212"/><rect x="538" y="18.2" width="1" height="5.7" fill="#2a1212"/><rect x="538" y="30.0" width="1" height="5.7" fill="#2a1212"/><rect x="539" y="-0.2" width="1" height="4.7" fill="#2a1212"/><rect x="539" y="13.6" width="1" height="4.7" fill="#2a1212"/><rect x="539" y="18.2" width="1" height="4.4" fill="#2a1212"/><rect x="539" y="31.3" width="1" height="4.4" fill="#2a1212"/><rect x="540" y="-0.2" width="1" height="6.7" fill="#2a1212"/><rect x="540" y="11.5" width="1" height="6.7" fill="#2a1212"/><rect x="540" y="18.2" width="1" height="6.4" fill="#2a1212"/><rect x="540" y="29.4" width="1" height="6.4" fill="#2a1212"/><rect x="541" y="-0.2" width="1" height="4.6" fill="#2a1212"/><rect x="541" y="13.7" width="1" height="4.6" fill="#2a1212"/><rect x="541" y="18.2" width="1" height="4.3" fill="#2a1212"/><rect x="541" y="31.4" width="1" height="4.3" fill="#2a1212"/><rect x="542" y="-0.2" width="1" height="5.9" fill="#2a1212"/><rect x="542" y="12.3" width="1" height="5.9" fill="#2a1212"/><rect x="542" y="18.2" width="1" height="5.6" fill="#2a1212"/><rect x="542" y="30.1" width="1" height="5.6" fill="#2a1212"/><rect x="543" y="-0.2" width="1" height="5.1" fill="#2a1212"/><rect x="543" y="13.2" width="1" height="5.1" fill="#2a1212"/><rect x="543" y="18.2" width="1" height="4.8" fill="#2a1212"/><rect x="543" y="31.0" width="1" height="4.8" fill="#2a1212"/><rect x="544" y="-0.2" width="1" height="4.7" fill="#2a1212"/><rect x="544" y="13.5" width="1" height="4.7" fill="#2a1212"/><rect x="544" y="18.2" width="1" height="4.5" fill="#2a1212"/><rect x="544" y="31.3" width="1" height="4.5" fill="#2a1212"/><rect x="545" y="-0.2" width="1" height="5.5" fill="#2a1212"/><rect x="545" y="12.8" width="1" height="5.5" fill="#2a1212"/><rect x="545" y="18.2" width="1" height="5.2" fill="#2a1212"/><rect x="545" y="30.6" width="1" height="5.2" fill="#2a1212"/><rect x="546" y="-0.2" width="1" height="8.1" fill="#2a1212"/><rect x="546" y="10.1" width="1" height="8.1" fill="#2a1212"/><rect x="546" y="18.2" width="1" height="7.7" fill="#2a1212"/><rect x="546" y="28.1" width="1" height="7.7" fill="#2a1212"/><rect x="547" y="-0.2" width="1" height="8.1" fill="#2a1212"/><rect x="547" y="10.1" width="1" height="8.1" fill="#2a1212"/><rect x="547" y="18.2" width="1" height="7.7" fill="#2a1212"/><rect x="547" y="28.1" width="1" height="7.7" fill="#2a1212"/><rect x="548" y="-0.2" width="1" height="8.1" fill="#2a1212"/><rect x="548" y="10.1" width="1" height="8.1" fill="#2a1212"/><rect x="548" y="18.2" width="1" height="7.7" fill="#2a1212"/><rect x="548" y="28.1" width="1" height="7.7" fill="#2a1212"/><rect x="549" y="-0.2" width="1" height="8.1" fill="#2a1212"/><rect x="549" y="10.1" width="1" height="8.1" fill="#2a1212"/><rect x="549" y="18.2" width="1" height="7.7" fill="#2a1212"/><rect x="549" y="28.1" width="1" height="7.7" fill="#2a1212"/><rect x="550" y="-0.2" width="1" height="8.1" fill="#2a1212"/><rect x="550" y="10.1" width="1" height="8.1" fill="#2a1212"/><rect x="550" y="18.2" width="1" height="7.7" fill="#2a1212"/><rect x="550" y="28.1" width="1" height="7.7" fill="#2a1212"/><rect x="551" y="-0.2" width="1" height="8.1" fill="#2a1212"/><rect x="551" y="10.1" width="1" height="8.1" fill="#2a1212"/><rect x="551" y="18.2" width="1" height="7.7" fill="#2a1212"/><rect x="551" y="28.1" width="1" height="7.7" fill="#2a1212"/><rect x="552" y="-0.2" width="1" height="8.1" fill="#2a1212"/><rect x="552" y="10.1" width="1" height="8.1" fill="#2a1212"/><rect x="552" y="18.2" width="1" height="7.7" fill="#2a1212"/><rect x="552" y="28.1" width="1" height="7.7" fill="#2a1212"/><rect x="553" y="-0.2" width="1" height="8.1" fill="#2a1212"/><rect x="553" y="10.1" width="1" height="8.1" fill="#2a1212"/><rect x="553" y="18.2" width="1" height="7.7" fill="#2a1212"/><rect x="553" y="28.1" width="1" height="7.7" fill="#2a1212"/><rect x="554" y="-0.2" width="1" height="8.1" fill="#2a1212"/><rect x="554" y="10.1" width="1" height="8.1" fill="#2a1212"/><rect x="554" y="18.2" width="1" height="7.7" fill="#2a1212"/><rect x="554" y="28.1" width="1" height="7.7" fill="#2a1212"/><rect x="555" y="-0.2" width="1" height="8.1" fill="#2a1212"/><rect x="555" y="10.1" width="1" height="8.1" fill="#2a1212"/><rect x="555" y="18.2" width="1" height="7.7" fill="#2a1212"/><rect x="555" y="28.1" width="1" height="7.7" fill="#2a1212"/><rect x="72" y="0" width="1" height="35" fill="#2a1212" opacity="0.35"/><rect x="81" y="0" width="1" height="35" fill="#2a1212" opacity="0.35"/><rect x="90" y="0" width="1" height="35" fill="#2a1212" opacity="0.35"/><rect x="99" y="0" width="1" height="35" fill="#2a1212" opacity="0.35"/><rect x="108" y="0" width="1" height="35" fill="#2a1212" opacity="0.35"/><rect x="125" y="0" width="1" height="35" fill="#2a1212" opacity="0.35"/><rect x="257" y="0" width="1" height="35" fill="#2a1212" opacity="0.35"/><rect x="274" y="0" width="1" height="35" fill="#2a1212" opacity="0.35"/><rect x="283" y="0" width="1" height="35" fill="#2a1212" opacity="0.35"/></svg>
<div class="a" style="left:399px;top:161px;width:358px;height:16.5px;background:rgba(60,14,14,0.75);border-radius:0px;"></div>
<div class="t" style="left:403px;top:164.19px;font-size:11px;line-height:11px;color:#f6f6f6;font-weight:700;">נתן גושן וישי ריבו - נחכה לך Nathan Goshen &amp; Ishay Ribo.mp3_music</div>
<div class="a" style="left:803px;top:112px;width:1px;height:686px;background:#f0f0f0;border-radius:0px;"></div>
<div class="a" style="left:804px;top:112px;width:1px;height:686px;background:#000;border-radius:0px;"></div>
<div class="a" style="left:805px;top:112px;width:1px;height:686px;background:#f0f0f0;border-radius:0px;"></div>
<div class="a" style="left:1417px;top:119px;width:13px;height:13px;background:#6a6c70;border-radius:1px;"></div>
<svg class="a" style="left:1419px;top:123px;" width="9" height="6" viewBox="0 0 9 6"><path d="M0,0 H9 L4.5,6 Z" fill="#25292c"/></svg>
<svg class="a" style="left:1417px;top:142px;" width="9" height="8" viewBox="0 0 9 8"><path d="M0.5,7.5 L8.5,0.5" stroke="#a0a3a7" stroke-width="1.4"/></svg>
<div class="a" style="left:1420px;top:159px;width:1px;height:47px;background:#8c8e92;border-radius:0px;"></div>
<svg class="a" style="left:1416px;top:193px;" width="9" height="9" viewBox="0 0 9 9"><circle cx="4.5" cy="4.5" r="3.5" fill="#a0a3a7"/></svg>
<div class="a" style="left:1420px;top:230px;width:1px;height:460px;background:#8c8e92;border-radius:0px;"></div>
<svg class="a" style="left:1416.5px;top:709px;" width="9" height="6" viewBox="0 0 9 6"><path d="M0,0 H9 L4.5,5 Z" fill="#a0a3a7"/></svg>
<div class="a" style="left:1417px;top:724px;width:6px;height:1px;background:#a0a3a7;border-radius:0px;"></div>
<div class="a" style="left:1420px;top:730px;width:1px;height:56px;background:#8c8e92;border-radius:0px;"></div>
<svg class="a" style="left:1416px;top:733.5px;" width="9" height="9" viewBox="0 0 9 9"><circle cx="4.5" cy="4.5" r="3" fill="#a0a3a7"/></svg>
<svg class="a" style="left:1416px;top:787px;" width="9" height="9" viewBox="0 0 9 9"><path d="M4.5,1 V8 M1,4.5 H8" stroke="#a0a3a7" stroke-width="1.2"/></svg>
<div class="a" style="left:407px;top:802px;width:549px;height:6px;background:#cfcfcf;border-radius:3px;"></div>
<div class="a" style="left:956px;top:805px;width:336px;height:1px;background:#6e7074;border-radius:0px;"></div>
<svg class="a" style="left:1312.5px;top:803.5px;" width="9" height="6" viewBox="0 0 9 6"><path d="M0,0 H9 L4.5,5 Z" fill="#a0a3a7"/></svg>
<div class="a" style="left:1329px;top:805px;width:6px;height:1px;background:#a0a3a7;border-radius:0px;"></div>
<div class="a" style="left:1341px;top:805px;width:46px;height:1px;background:#8c8e92;border-radius:0px;"></div>
<svg class="a" style="left:1342px;top:800.5px;" width="10" height="10" viewBox="0 0 10 10"><circle cx="5" cy="5" r="3" fill="#a0a3a7"/></svg>
<svg class="a" style="left:1395px;top:801px;" width="9" height="9" viewBox="0 0 9 9"><path d="M4.5,1 V8 M1,4.5 H8" stroke="#a0a3a7" stroke-width="1.2"/></svg>
<div class="a" style="left:550px;top:301px;width:820px;height:430px;background:#f0f0f0;border-radius:0px;"></div>
<div class="a" style="left:550px;top:301px;width:820px;height:30px;background:#ffffff;border-radius:0px;"></div>
<svg class="a" style="left:548px;top:302px;" width="28" height="28" viewBox="0 0 28 28"><g transform="translate(5,3.8) scale(1.167) translate(-4,-2.8)"><path d="M4,20.8 L22,2.8 L22,20.8 Z" fill="#e2e2e2"/><path d="M13.5,2.8 L5,11.5 L14,19.8 L16.8,17.2 Q12,15.5 11,11.5 Q12,7.5 16,5.3 Z" fill="#ad1528"/><circle cx="17" cy="11.2" r="2" fill="#a0101f"/></g></svg>
<div class="t" style="left:853px;top:309.84px;font-size:12px;line-height:12px;color:#000;font-weight:400;">Audio Connections - Inputs</div>
<div class="a" style="left:1250px;top:315px;width:11px;height:1px;background:#6a6a6a;border-radius:0px;"></div>
<svg class="a" style="left:1295px;top:309px;" width="12" height="12" viewBox="0 0 12 12"><rect x="0.5" y="0.5" width="10" height="10" fill="none" stroke="#6a6a6a"/></svg>
<svg class="a" style="left:1341px;top:309px;" width="12" height="12" viewBox="0 0 12 12"><path d="M0.5,0.5 L11,11 M11,0.5 L0.5,11" stroke="#6a6a6a" stroke-width="1"/></svg>
<div class="a" style="left:551px;top:355px;width:5px;height:1px;background:#ffffff;border-radius:0px;"></div>
<div class="a" style="left:692px;top:355px;width:677px;height:1px;background:#ffffff;border-radius:0px;"></div>
<div class="a" style="left:556px;top:336px;width:135px;height:21px;border-top:1px solid #fff;border-left:1px solid #fff;border-top-left-radius:4px;background:#f0f0f0"></div>
<div class="t" style="left:323px;width:600px;text-align:center;top:341.84px;font-size:12px;line-height:12px;color:#ffffff;font-weight:700;">Inputs</div>
<div class="a" style="left:689px;top:337px;width:3px;height:19px;border-right:2px solid #646464;border-top-right-radius:4px"></div>
<div class="a" style="left:692px;top:336px;width:135px;height:19px;border-top:1px solid #fff;border-left:1px solid #fff;border-top-left-radius:4px;background:#f0f0f0"></div>
<div class="t" style="left:459px;width:600px;text-align:center;top:340.84px;font-size:12px;line-height:12px;color:#000;font-weight:400;">Outputs</div>
<div class="a" style="left:825px;top:337px;width:3px;height:19px;border-right:2px solid #646464;border-top-right-radius:4px"></div>
<div class="a" style="left:828px;top:336px;width:135px;height:19px;border-top:1px solid #fff;border-left:1px solid #fff;border-top-left-radius:4px;background:#f0f0f0"></div>
<div class="t" style="left:595px;width:600px;text-align:center;top:340.84px;font-size:12px;line-height:12px;color:#000;font-weight:400;">Group/FX</div>
<div class="a" style="left:961px;top:337px;width:3px;height:19px;border-right:2px solid #646464;border-top-right-radius:4px"></div>
<div class="a" style="left:964px;top:336px;width:135px;height:19px;border-top:1px solid #fff;border-left:1px solid #fff;border-top-left-radius:4px;background:#f0f0f0"></div>
<div class="t" style="left:731px;width:600px;text-align:center;top:340.84px;font-size:12px;line-height:12px;color:#000;font-weight:400;">External FX</div>
<div class="a" style="left:1097px;top:337px;width:3px;height:19px;border-right:2px solid #646464;border-top-right-radius:4px"></div>
<div class="a" style="left:1100px;top:336px;width:135px;height:19px;border-top:1px solid #fff;border-left:1px solid #fff;border-top-left-radius:4px;background:#f0f0f0"></div>
<div class="t" style="left:867px;width:600px;text-align:center;top:340.84px;font-size:12px;line-height:12px;color:#000;font-weight:400;">External Instruments</div>
<div class="a" style="left:1233px;top:337px;width:3px;height:19px;border-right:2px solid #646464;border-top-right-radius:4px"></div>
<div class="a" style="left:1236px;top:336px;width:133px;height:19px;border-top:1px solid #fff;border-left:1px solid #fff;border-top-left-radius:4px;background:#f0f0f0"></div>
<div class="t" style="left:1002px;width:600px;text-align:center;top:340.84px;font-size:12px;line-height:12px;color:#000;font-weight:400;">Control Room</div>
<svg class="a" style="left:568px;top:371px;" width="22" height="12" viewBox="0 0 22 12"><rect x="0.5" y="0.5" width="9" height="9" fill="#f0f0f0" stroke="#000"/><path d="M2.5,5 H7.5 M5,2.5 V7.5" stroke="#000" stroke-width="1.2"/><rect x="12.5" y="0.5" width="9" height="9" fill="#f0f0f0" stroke="#000"/><path d="M14.5,5 H19.5" stroke="#000" stroke-width="1.2"/></svg>
<div class="t" style="left:593px;top:370.69px;font-size:11px;line-height:11px;color:#000;font-weight:400;">All</div>
<div class="a" style="left:631px;top:367px;width:119px;height:16px;background:#e1e1e1;border:1px solid #adadad;border-radius:0px;"></div>
<div class="a" style="left:632px;top:382px;width:118px;height:2px;background:#7a7a7a;border-radius:0px;"></div>
<div class="a" style="left:749px;top:367px;width:2px;height:17px;background:#7a7a7a;border-radius:0px;"></div>
<div class="t" style="left:390px;width:600px;text-align:center;top:370.19px;font-size:11px;line-height:11px;color:#000;font-weight:400;">Add Bus</div>
<div class="t" style="left:792px;top:371.37px;font-size:10.2px;line-height:10.2px;color:#000;font-weight:400;">Presets</div>
<div class="a" style="left:830px;top:367px;width:78px;height:16px;background:#ffffff;border-radius:0px;"></div>
<div class="a" style="left:830px;top:367px;width:1px;height:16px;background:#7a7a7a;border-radius:0px;"></div>
<div class="a" style="left:831px;top:367px;width:76px;height:1px;background:#7a7a7a;border-radius:0px;"></div>
<div class="t" style="left:837px;top:369.69px;font-size:11px;line-height:11px;color:#000;font-weight:400;">-</div>
<div class="a" style="left:894px;top:369px;width:11px;height:12px;background:#e8e8e8;border:1px solid #bcbcbc;border-radius:0px;"></div>
<svg class="a" style="left:896px;top:374px;" width="7" height="4" viewBox="0 0 7 4"><path d="M0,0 H7 L3.5,4 Z" fill="#444"/></svg>
<svg class="a" style="left:915px;top:367px;" width="19" height="14" viewBox="0 0 19 14"><rect x="0.6" y="0.6" width="17" height="12.6" rx="2" fill="#c9cbd9" stroke="#2a2a2a" stroke-width="1.1"/><path d="M3.4,1.4 H12.3 L15.4,4.4 V9.1 H3.4 Z" fill="#e4e6ee" stroke="#000" stroke-width="1.1"/><path d="M12.3,1.4 V4.4 H15.4" fill="none" stroke="#000" stroke-width="1.1"/><path d="M5,4.6 H9.6 M7.3,2.4 V7" stroke="#000" stroke-width="1.3"/></svg>
<svg class="a" style="left:936px;top:367px;" width="19" height="14" viewBox="0 0 19 14"><rect x="0.6" y="0.6" width="17" height="12.6" rx="2" fill="#c9cbd9" stroke="#2a2a2a" stroke-width="1.1"/><path d="M3.4,1.4 H12.3 L15.4,4.4 V9.1 H3.4 Z" fill="#e4e6ee" stroke="#000" stroke-width="1.1"/><path d="M12.3,1.4 V4.4 H15.4" fill="none" stroke="#000" stroke-width="1.1"/><path d="M5.3,4.8 H10.2" stroke="#000" stroke-width="1.3"/></svg>
<div class="a" style="left:559px;top:393px;width:786px;height:316px;background:#ffffff;border-radius:0px;"></div>
<div class="a" style="left:559px;top:393px;width:802px;height:1px;background:#696969;border-radius:0px;"></div>
<div class="a" style="left:559px;top:393px;width:1px;height:333px;background:#696969;border-radius:0px;"></div>
<div class="a" style="left:560px;top:394px;width:782px;height:16px;background:#f0f0f0;border-radius:0px;"></div>
<div class="a" style="left:560px;top:409px;width:782px;height:1px;background:#a0a0a0;border-radius:0px;"></div>
<div class="a" style="left:560px;top:426px;width:782px;height:1px;background:#a0a0a0;border-radius:0px;"></div>
<div class="a" style="left:659px;top:394px;width:1px;height:314px;background:#a0a0a0;border-radius:0px;"></div>
<div class="a" style="left:739px;top:394px;width:1px;height:314px;background:#a0a0a0;border-radius:0px;"></div>
<div class="a" style="left:869px;top:394px;width:1px;height:314px;background:#a0a0a0;border-radius:0px;"></div>
<div class="a" style="left:999px;top:394px;width:1px;height:314px;background:#a0a0a0;border-radius:0px;"></div>
<div class="a" style="left:1341px;top:394px;width:1px;height:16px;background:#a0a0a0;border-radius:0px;"></div>
<div class="t" style="left:565px;top:397.70px;font-size:10.4px;line-height:10.4px;color:#000;font-weight:400;">Bus Name</div>
<div class="t" style="left:665px;top:397.70px;font-size:10.4px;line-height:10.4px;color:#000;font-weight:400;">Speakers</div>
<div class="t" style="left:745px;top:397.70px;font-size:10.4px;line-height:10.4px;color:#000;font-weight:400;">Audio Device</div>
<div class="t" style="left:875px;top:397.70px;font-size:10.4px;line-height:10.4px;color:#000;font-weight:400;">Device Port</div>
<svg class="a" style="left:566px;top:412px;" width="32" height="13" viewBox="0 0 32 13"><rect x="0.5" y="2" width="8" height="8" fill="#fff" stroke="#333"/><path d="M2.5,6 H6.5 M4.5,4 V8" stroke="#000"/><path d="M9,6 H16" stroke="#666" stroke-dasharray="1 1"/><path d="M4.5,-1 V2" stroke="#666" stroke-dasharray="1 1"/><path d="M18.5,4.5 H21 L25,1.5 V11 L21,8 H18.5 Z" fill="#e8652e"/><path d="M21,4.5 V8" stroke="#c24a1a"/><path d="M27,3.5 Q29.5,6.2 27,9" stroke="#c8c8c8" fill="none" stroke-width="1.4"/></svg>
<div class="a" style="left:600px;top:411px;width:49px;height:15px;background:#0078d7;border-radius:0px;"></div>
<div class="t" style="left:603px;top:414.03px;font-size:10.6px;line-height:10.6px;color:#fff;font-weight:400;">Stereo In</div>
<div class="t" style="left:664px;top:414.20px;font-size:10.4px;line-height:10.4px;color:#6d6d6d;font-weight:400;">Stereo</div>
<div class="t" style="left:744px;top:413.7px;width:125px;overflow:hidden;font-size:10.4px;line-height:11px;color:#000">Yamaha Steinberg USB ASIO</div>
<div class="a" style="left:870px;top:411px;width:129px;height:15px;background:#ffefb0;border-radius:0px;"></div>
<div class="t" style="left:874px;top:414.20px;font-size:10.4px;line-height:10.4px;color:#8a7a5a;font-weight:400;">AG06/AG03 - 1</div>
<div class="a" style="left:1345px;top:394px;width:17px;height:315px;background:#f0f0f0;border-radius:0px;"></div>
<div class="a" style="left:1362px;top:393px;width:1px;height:316px;background:#ffffff;border-radius:0px;"></div>
<svg class="a" style="left:1347px;top:413px;" width="11" height="8" viewBox="0 0 11 8"><path d="M1,6.5 L5.5,2 L10,6.5" fill="none" stroke="#a8a8a8" stroke-width="1.6"/></svg>
<svg class="a" style="left:1347px;top:696px;" width="11" height="8" viewBox="0 0 11 8"><path d="M1,1.5 L5.5,6 L10,1.5" fill="none" stroke="#a8a8a8" stroke-width="1.6"/></svg>
<div class="a" style="left:560px;top:709px;width:785px;height:17px;background:#f0f0f0;border-radius:0px;"></div>
<div class="a" style="left:559px;top:726px;width:787px;height:1px;background:#ffffff;border-radius:0px;"></div>
<div class="a" style="left:1345px;top:709px;width:1px;height:18px;background:#ffffff;border-radius:0px;"></div>
<svg class="a" style="left:564px;top:712px;" width="8" height="11" viewBox="0 0 8 11"><path d="M6.5,1 L2,5.5 L6.5,10" fill="none" stroke="#a8a8a8" stroke-width="1.6"/></svg>
<svg class="a" style="left:1330px;top:712px;" width="8" height="11" viewBox="0 0 8 11"><path d="M1.5,1 L6,5.5 L1.5,10" fill="none" stroke="#a8a8a8" stroke-width="1.6"/></svg>
<div class="a" style="left:0px;top:820px;width:1440px;height:40px;background:#26292c;border-radius:0px;"></div>
<div class="a" style="left:6px;top:827px;width:25px;height:25px;background:#5a5c60;border:1px solid #7e8084;border-radius:3px;"></div>
<svg class="a" style="left:10px;top:832px;" width="18" height="18" viewBox="0 0 18 18"><circle cx="9" cy="9" r="4.5" fill="none" stroke="#fff" stroke-width="1.6"/><path d="M9,6.5 V9 H11.5" stroke="#fff" stroke-width="1.3" fill="none"/><path d="M4,3 A7.5,7.5 0 0 0 4,15 M14,3 A7.5,7.5 0 0 1 14,15" stroke="#fff" stroke-width="2" fill="none"/></svg>
<div class="a" style="left:36px;top:827px;width:44px;height:25px;background:#1a1b1e;border:1px solid #7e8084;border-radius:3px;"></div>
<svg class="a" style="left:43px;top:833px;" width="12" height="12" viewBox="0 0 12 12"><circle cx="6" cy="6" r="5.5" fill="#f0f0f0"/></svg>
<svg class="a" style="left:63px;top:836px;" width="11" height="9" viewBox="0 0 11 9"><path d="M0,0 H9 L4.5,7.5 Z" fill="#fff"/></svg>
<div class="a" style="left:83px;top:834px;width:3px;height:3px;background:#8c8e92;border-radius:0px;"></div>
<div class="a" style="left:83px;top:838px;width:3px;height:3px;background:#8c8e92;border-radius:0px;"></div>
<div class="a" style="left:83px;top:842px;width:3px;height:3px;background:#8c8e92;border-radius:0px;"></div>
<div class="a" style="left:91px;top:827px;width:44px;height:25px;background:#1a1b1e;border:1px solid #7e8084;border-radius:3px;"></div>
<svg class="a" style="left:95px;top:832.5px;" width="19" height="15" viewBox="0 0 19 15"><path d="M0,8.5 H19" stroke="#fff" stroke-width="1.2"/><path d="M3.5,6 V11 M5.5,5 V12 M7.5,3 V13 M9.5,1 V15 M11.5,4 V13 M13.5,6 V11 M15.5,7 V10" stroke="#fff" stroke-width="1.3"/></svg>
<svg class="a" style="left:118px;top:836px;" width="11" height="9" viewBox="0 0 11 9"><path d="M0,0 H9 L4.5,7.5 Z" fill="#fff"/></svg>
<div class="a" style="left:138px;top:834px;width:3px;height:3px;background:#8c8e92;border-radius:0px;"></div>
<div class="a" style="left:138px;top:838px;width:3px;height:3px;background:#8c8e92;border-radius:0px;"></div>
<div class="a" style="left:138px;top:842px;width:3px;height:3px;background:#8c8e92;border-radius:0px;"></div>
<div class="a" style="left:146px;top:827px;width:44px;height:25px;background:#1a1b1e;border:1px solid #7e8084;border-radius:3px;"></div>
<svg class="a" style="left:151px;top:832px;" width="16" height="16" viewBox="0 0 16 16"><circle cx="8" cy="8" r="7.5" fill="#f0f0f0"/><circle cx="4" cy="7" r="1" fill="#1a1b1e"/><circle cx="5.5" cy="4.2" r="1" fill="#1a1b1e"/><circle cx="8" cy="3.2" r="1" fill="#1a1b1e"/><circle cx="10.5" cy="4.2" r="1" fill="#1a1b1e"/><circle cx="12" cy="7" r="1" fill="#1a1b1e"/></svg>
<svg class="a" style="left:173px;top:836px;" width="11" height="9" viewBox="0 0 11 9"><path d="M0,0 H9 L4.5,7.5 Z" fill="#fff"/></svg>
<div class="a" style="left:193px;top:834px;width:3px;height:3px;background:#8c8e92;border-radius:0px;"></div>
<div class="a" style="left:193px;top:838px;width:3px;height:3px;background:#8c8e92;border-radius:0px;"></div>
<div class="a" style="left:193px;top:842px;width:3px;height:3px;background:#8c8e92;border-radius:0px;"></div>
<div class="a" style="left:201px;top:827px;width:38px;height:25px;background:#5a5c60;border:1px solid #7e8084;border-radius:3px;"></div>
<div class="t" style="left:-80px;width:600px;text-align:center;top:833.00px;font-size:13px;line-height:13px;color:#f0f0f0;font-weight:400;letter-spacing:-1px">AQ</div>
<div class="a" style="left:249px;top:827px;width:150px;height:25px;background:#1a1b1e;border:1px solid #7e8084;border-radius:3px;"></div>
<div class="a" style="left:250px;top:828px;width:24px;height:23px;background:#5a5c60;border-radius:0px;"></div>
<svg class="a" style="left:255px;top:831px;" width="14" height="16" viewBox="0 0 14 16"><path d="M2.8,3 H11 L4.2,10 V14.2 H2.8 Z" fill="#fff"/></svg>
<div class="a" style="left:273px;top:828px;width:1px;height:23px;background:#8a8c90;border-radius:0px;"></div>
<svg class="a" style="left:257px;top:846px;" width="9" height="7" viewBox="0 0 9 7"><path d="M0,6 L4.5,1.5 L9,6 Z" fill="#26292c"/><path d="M0,5.6 L4.5,1.2 L9,5.6" fill="none" stroke="#8a8c90" stroke-width="1.1"/></svg>
<div class="t" style="left:310px;top:832.46px;font-size:16px;line-height:16px;color:#f0f0f0;font-weight:400;">1.</div>
<div class="t" style="left:332px;top:832.46px;font-size:16px;line-height:16px;color:#f0f0f0;font-weight:400;">1.</div>
<div class="t" style="left:354px;top:832.46px;font-size:16px;line-height:16px;color:#f0f0f0;font-weight:400;">1.</div>
<div class="t" style="left:383px;top:832.46px;font-size:16px;line-height:16px;color:#f0f0f0;font-weight:400;">0</div>
<div class="a" style="left:405px;top:827px;width:149px;height:25px;background:#1a1b1e;border:1px solid #7e8084;border-radius:3px;"></div>
<div class="a" style="left:406px;top:828px;width:24px;height:23px;background:#5a5c60;border-radius:0px;"></div>
<svg class="a" style="left:410px;top:831px;" width="14" height="16" viewBox="0 0 14 16"><path d="M11.2,3 H3 L9.8,10 V14.2 H11.2 Z" fill="#fff"/></svg>
<div class="a" style="left:429px;top:828px;width:1px;height:23px;background:#8a8c90;border-radius:0px;"></div>
<svg class="a" style="left:413px;top:846px;" width="9" height="7" viewBox="0 0 9 7"><path d="M0,6 L4.5,1.5 L9,6 Z" fill="#26292c"/><path d="M0,5.6 L4.5,1.2 L9,5.6" fill="none" stroke="#8a8c90" stroke-width="1.1"/></svg>
<div class="t" style="left:466px;top:832.46px;font-size:16px;line-height:16px;color:#f0f0f0;font-weight:400;">1.</div>
<div class="t" style="left:488px;top:832.46px;font-size:16px;line-height:16px;color:#f0f0f0;font-weight:400;">1.</div>
<div class="t" style="left:510px;top:832.46px;font-size:16px;line-height:16px;color:#f0f0f0;font-weight:400;">1.</div>
<div class="t" style="left:539px;top:832.46px;font-size:16px;line-height:16px;color:#f0f0f0;font-weight:400;">0</div>
<div class="a" style="left:560px;top:827px;width:75px;height:25px;background:#5a5c60;border:1px solid #7e8084;border-radius:3px;"></div>
<div class="a" style="left:561px;top:828px;width:24px;height:23px;background:#f2f2f2;border-radius:0px;"></div>
<svg class="a" style="left:565px;top:831px;" width="14" height="16" viewBox="0 0 14 16"><path d="M4,7 V5 Q4,2 7,2 Q10,2 10,5 V7" fill="none" stroke="#000" stroke-width="1.8"/><rect x="2.5" y="7" width="9" height="7" rx="1" fill="#000"/></svg>
<svg class="a" style="left:591px;top:832px;" width="12" height="15" viewBox="0 0 12 15"><path d="M1,1 H11 L6,7 Z" fill="#fff"/><circle cx="6" cy="11" r="1.6" fill="#fff"/></svg>
<svg class="a" style="left:592.5px;top:846px;" width="9" height="7" viewBox="0 0 9 7"><path d="M0,6 L4.5,1.5 L9,6 Z" fill="#26292c"/><path d="M0,5.6 L4.5,1.2 L9,5.6" fill="none" stroke="#8a8c90" stroke-width="1.1"/></svg>
<svg class="a" style="left:617.5px;top:846px;" width="9" height="7" viewBox="0 0 9 7"><path d="M0,6 L4.5,1.5 L9,6 Z" fill="#26292c"/><path d="M0,5.6 L4.5,1.2 L9,5.6" fill="none" stroke="#8a8c90" stroke-width="1.1"/></svg>
<svg class="a" style="left:616px;top:832px;" width="12" height="15" viewBox="0 0 12 15"><circle cx="6" cy="3" r="1.6" fill="#fff"/><path d="M1,13 H11 L6,7 Z" fill="#fff"/></svg>
<div class="a" style="left:638px;top:834px;width:3px;height:3px;background:#8c8e92;border-radius:0px;"></div>
<div class="a" style="left:638px;top:838px;width:3px;height:3px;background:#8c8e92;border-radius:0px;"></div>
<div class="a" style="left:638px;top:842px;width:3px;height:3px;background:#8c8e92;border-radius:0px;"></div>
<div class="a" style="left:646px;top:824px;width:276px;height:32px;background:#45474b;border:1.5px solid #b0b2b4;border-radius:4px;"></div>
<div class="a" style="left:822px;top:825.5px;width:50px;height:29.0px;background:#3bd63b;border-radius:0px;"></div>
<svg class="a" style="left:659px;top:832px;" width="15" height="15" viewBox="0 0 15 15"><path d="M1,1 V14" stroke="#fff" stroke-width="1.6"/><path d="M13,1.5 L3.5,7.5 L13,13.5 Z" fill="none" stroke="#fff" stroke-width="1.6"/></svg>
<svg class="a" style="left:697px;top:832px;" width="15" height="15" viewBox="0 0 15 15"><path d="M14,1 V14" stroke="#fff" stroke-width="1.6"/><path d="M2,1.5 L11.5,7.5 L2,13.5 Z" fill="none" stroke="#fff" stroke-width="1.6"/></svg>
<svg class="a" style="left:739px;top:832px;" width="17" height="15" viewBox="0 0 17 15"><path d="M1,12 H9 Q14,12 14,7.5 Q14,3 9,3 L4,8" fill="none" stroke="#fff" stroke-width="1.6"/></svg>
<svg class="a" style="left:790px;top:832px;" width="16" height="16" viewBox="0 0 16 16"><rect x="2.9" y="2.9" width="10.2" height="10.2" fill="none" stroke="#fff" stroke-width="1.8"/></svg>
<svg class="a" style="left:840px;top:832px;" width="16" height="16" viewBox="0 0 16 16"><path d="M3,2.3 L13.5,7.8 L3,13.3 Z" fill="none" stroke="#000" stroke-width="1.9" stroke-linejoin="round"/></svg>
<svg class="a" style="left:889px;top:832px;" width="17" height="17" viewBox="0 0 17 17"><circle cx="8.5" cy="8" r="5.6" fill="none" stroke="#fff" stroke-width="1.7"/></svg>
<div class="a" style="left:925px;top:834px;width:3px;height:3px;background:#8c8e92;border-radius:0px;"></div>
<div class="a" style="left:925px;top:838px;width:3px;height:3px;background:#8c8e92;border-radius:0px;"></div>
<div class="a" style="left:925px;top:842px;width:3px;height:3px;background:#8c8e92;border-radius:0px;"></div>
<div class="a" style="left:933px;top:827px;width:37px;height:25px;background:#5a5c60;border:1px solid #7e8084;border-radius:3px;"></div>
<svg class="a" style="left:944px;top:832px;" width="16" height="16" viewBox="0 0 16 16"><circle cx="9" cy="8" r="6" fill="#808286"/><circle cx="11" cy="7" r="5" fill="#5a5c60"/><circle cx="6" cy="8" r="2.5" fill="#808286"/></svg>
<div class="a" style="left:976px;top:827px;width:150px;height:25px;background:#1a1b1e;border:1px solid #7e8084;border-radius:3px;"></div>
<div class="a" style="left:977px;top:828px;width:24px;height:23px;background:#5a5c60;border-radius:0px;"></div>
<svg class="a" style="left:981px;top:832px;" width="14" height="15" viewBox="0 0 14 15"><path d="M10.5,1 V11" stroke="#fff" stroke-width="1.6"/><ellipse cx="7" cy="11.5" rx="4" ry="3" fill="#fff" transform="rotate(-20 7 11.5)"/></svg>
<div class="t" style="left:1027.5px;top:832.46px;font-size:16px;line-height:16px;color:#f0f0f0;font-weight:400;">75.</div>
<div class="t" style="left:1059.5px;top:832.46px;font-size:16px;line-height:16px;color:#f0f0f0;font-weight:400;">1.</div>
<div class="t" style="left:1081px;top:832.46px;font-size:16px;line-height:16px;color:#f0f0f0;font-weight:400;">2.</div>
<div class="t" style="left:1102.5px;top:832.46px;font-size:16px;line-height:16px;color:#f0f0f0;font-weight:400;">10</div>
<div class="a" style="left:1129px;top:834px;width:3px;height:3px;background:#8c8e92;border-radius:0px;"></div>
<div class="a" style="left:1129px;top:838px;width:3px;height:3px;background:#8c8e92;border-radius:0px;"></div>
<div class="a" style="left:1129px;top:842px;width:3px;height:3px;background:#8c8e92;border-radius:0px;"></div>
<div class="a" style="left:1137px;top:827px;width:93px;height:25px;background:#1a1b1e;border:1px solid #7e8084;border-radius:3px;"></div>
<div class="a" style="left:1138px;top:828px;width:23px;height:23px;background:#5a5c60;border-radius:0px;"></div>
<svg class="a" style="left:1137px;top:827px;" width="25" height="25" viewBox="0 0 25 25"><circle cx="8.8" cy="14.6" r="2.4" fill="#fff"/><path d="M10.6,5 V14.3" stroke="#fff" stroke-width="1.3"/><path d="M15.6,7.5 V17.5" stroke="#fff" stroke-width="1.3"/><path d="M13,9.5 L15.6,5.8 L18.2,9.5 Z M13,15.5 L15.6,19.2 L18.2,15.5 Z" fill="#fff"/></svg>
<div class="t" style="left:619px;width:600px;text-align:right;top:833.67px;font-size:12.2px;line-height:12.2px;color:#f0f0f0;font-weight:400;">120.000</div>
<svg class="a" style="left:1226px;top:834px;" width="5" height="14" viewBox="0 0 5 14"><path d="M1,5 L5,1.5 V5 Z M1,9 L5,12.5 V9 Z" fill="#d0d0d0"/></svg>
<div class="a" style="left:1230px;top:828px;width:2px;height:23px;background:#26292c;border-radius:0px;"></div>
<div class="a" style="left:1235px;top:827px;width:50px;height:25px;background:#5a5c60;border:1px solid #7e8084;border-radius:3px;"></div>
<svg class="a" style="left:1240px;top:830px;" width="17" height="17" viewBox="0 0 17 17"><path d="M3.8,14.8 L6.6,3 H8.8 L12,14.8 Z" fill="#fff"/><path d="M6.4,12.5 L12.3,4.2" stroke="#56585c" stroke-width="2.6"/><path d="M6.4,12.5 L12.3,4.2" stroke="#fff" stroke-width="1.3"/><circle cx="12.6" cy="3.8" r="1.5" fill="#fff"/></svg>
<svg class="a" style="left:1265px;top:830px;" width="17" height="17" viewBox="0 0 17 17"><path d="M3,10.8 L13.4,6.2 A5.4,5.4 0 1 0 12.4,12.6" fill="none" stroke="#fff" stroke-width="1.8"/></svg>
<div class="a" style="left:1289px;top:834px;width:3px;height:3px;background:#8c8e92;border-radius:0px;"></div>
<div class="a" style="left:1289px;top:838px;width:3px;height:3px;background:#8c8e92;border-radius:0px;"></div>
<div class="a" style="left:1289px;top:842px;width:3px;height:3px;background:#8c8e92;border-radius:0px;"></div>
<div class="a" style="left:1299px;top:825px;width:81px;height:31px;background:#000;border-radius:5px;"></div>
<div class="a" style="left:1320px;top:828px;width:1px;height:25px;background:#555;border-radius:0px;"></div>
<svg class="a" style="left:0;top:0" width="1440" height="900" viewBox="0 0 1440 900"><defs><linearGradient id="m2" x1="0" y1="0" x2="0" y2="1"><stop offset="0" stop-color="#3ef2a2"/><stop offset="1" stop-color="#1ad2ee"/></linearGradient><linearGradient id="m3" x1="0" y1="0" x2="0" y2="1"><stop offset="0" stop-color="#2ce0c0"/><stop offset="1" stop-color="#1ad2ee"/></linearGradient></defs><rect x="1330" y="839" width="7.2" height="13.8" fill="url(#m3)"/><rect x="1349" y="832" width="7.2" height="20.8" fill="url(#m2)"/><rect x="1357" y="832.8" width="7.2" height="20" fill="url(#m2)"/><rect x="1366.8" y="828" width="4.4" height="24.8" fill="#ff0000"/></svg>
<svg class="a" style="left:1382.5px;top:828px;" width="9" height="9" viewBox="0 0 9 9"><path d="M8,0 V8 L0,4 Z" fill="#fff"/></svg>
<div class="a" style="left:1401px;top:834px;width:3px;height:3px;background:#8c8e92;border-radius:0px;"></div>
<div class="a" style="left:1401px;top:838px;width:3px;height:3px;background:#8c8e92;border-radius:0px;"></div>
<div class="a" style="left:1401px;top:842px;width:3px;height:3px;background:#8c8e92;border-radius:0px;"></div>
<div class="a" style="left:1409px;top:827px;width:25px;height:25px;background:#5a5c60;border:1px solid #7e8084;border-radius:3px;"></div>
<svg class="a" style="left:1415px;top:832.5px;" width="14" height="14" viewBox="0 0 14 14"><path d="M5.53,0.44 L8.47,0.44 L8.65,2.09 L10.43,3.11 L11.95,2.45 L13.41,4.99 L12.08,5.98 L12.08,8.02 L13.41,9.01 L11.95,11.55 L10.43,10.89 L8.65,11.91 L8.47,13.56 L5.53,13.56 L5.35,11.91 L3.57,10.89 L2.05,11.55 L0.59,9.01 L1.92,8.02 L1.92,5.98 L0.59,4.99 L2.05,2.45 L3.57,3.11 L5.35,2.09 Z" fill="#fff"/><circle cx="7.0" cy="7.0" r="2.3800000000000003" fill="#5a5c60"/></svg>
<div class="a" style="left:0;top:860px;width:1440px;height:40px;background:linear-gradient(90deg,#6e6c6a 0px,#7a7876 4px,#8a8886 30px,#8e8c8a 200px,#9a9896 240px,#a2a09e 250px,#8f8d8b 275px,#8c8a88 450px,#918f8d 620px,#8a8886 800px,#878583 1040px)"></div>
<div class="a" style="left:1042px;top:860px;width:344px;height:40px;background:#b9b6b3;border-radius:0px;"></div>
<div class="a" style="left:1042px;top:860px;width:344px;height:40px;background:linear-gradient(90deg,#b3b0ad,#bcb9b6 40%,#b2afac 75%,#a9a7a5)"></div>
<div class="a" style="left:1386px;top:860px;width:54px;height:40px;background:linear-gradient(90deg,#7a7673,#72706e 60%,#6c6a68)"></div>
<svg class="a" style="left:0;top:0" width="1440" height="900" viewBox="0 0 1440 900"><path d="M1397,868.5 L1410,866.6 V879.6 H1397 Z M1411,866.4 L1429.3,864.7 V879.6 H1411 Z M1397,881 H1410 V894 L1397,892.5 Z M1411,881 H1429.3 V895.8 L1411,894.2 Z" fill="#fff"/></svg>
<div class="t" style="left:566px;width:600px;text-align:right;top:873.30px;font-size:15px;line-height:15px;color:#3a3a3a;font-weight:400;direction:rtl">הקלד כאן כדי לחפש</div>
<svg class="a" style="left:1357px;top:869px;" width="22" height="22" viewBox="0 0 22 22"><circle cx="11.5" cy="8.4" r="5" fill="none" stroke="#111" stroke-width="1.3"/><path d="M8,12 L1.5,18.5" stroke="#111" stroke-width="1.4"/></svg>
<svg class="a" style="left:1009px;top:870px;" width="20" height="16" viewBox="0 0 20 16"><path d="M6,1 H16 M6,15 H16 M6,4 V12 M16,4 V12 M3,4 H19 M3,12 H19" stroke="#111" stroke-width="1.3" fill="none"/><rect x="1" y="2" width="2" height="2" fill="#111"/><rect x="1" y="7" width="2" height="2" fill="#111"/><rect x="1" y="12" width="2" height="2" fill="#111"/></svg>
<svg class="a" style="left:24px;top:869px;" width="18" height="18" viewBox="0 0 18 18"><path d="M1,1.5 H17 V13 H9 L5,17 V13 H1 Z" fill="none" stroke="#111" stroke-width="1.3"/></svg>
<div class="t" style="left:-212px;width:600px;text-align:center;top:864.84px;font-size:12px;line-height:12px;color:#111;font-weight:400;">15:46</div>
<div class="t" style="left:-212px;width:600px;text-align:center;top:882.84px;font-size:12px;line-height:12px;color:#111;font-weight:400;">31/01/2021</div>
<div class="t" style="left:-448px;width:600px;text-align:right;top:874.84px;font-size:12px;line-height:12px;color:#111;font-weight:400;direction:rtl">עבר</div>
<svg class="a" style="left:162px;top:872px;" width="18" height="15" viewBox="0 0 18 15"><path d="M1,5 H4 L8,1.5 V13.5 L4,10 H1 Z" fill="none" stroke="#111" stroke-width="1.2"/><path d="M10.5,5 Q12,7.5 10.5,10 M13,3 Q16,7.5 13,12" stroke="#111" stroke-width="1.2" fill="none"/></svg>
<svg class="a" style="left:190px;top:872px;" width="18" height="15" viewBox="0 0 18 15"><path d="M2,13 Q2,5 12,3 M4,13 Q4,8 10,6 M7,13 Q7,10 10,9" stroke="#333" stroke-width="1.2" fill="none"/><circle cx="12" cy="12" r="1.8" fill="#111"/></svg>
<svg class="a" style="left:212px;top:874px;" width="14" height="9" viewBox="0 0 14 9"><path d="M1,8 L7,2 L13,8" stroke="#111" stroke-width="1.5" fill="none"/></svg>
<svg class="a" style="left:330px;top:862px;" width="36" height="36" viewBox="0 0 36 36"><path d="M13.2,7.6 A10.6,10.6 0 1 1 20.2,24" fill="none" stroke="#d83b01" stroke-width="3"/><path d="M12,19 A10.6,10.6 0 0 1 12.3,10" fill="none" stroke="#d83b01" stroke-width="1" stroke-dasharray="2 1.5"/><path d="M20.5,5.5 Q22,4.5 23.5,5.5 V26 H20.5 Z" fill="#ececec"/><path d="M22.2,5.2 Q23,5 23.5,5.5 V26 H22.2 Z" fill="#bdbdbd"/><path d="M24,12 L27,15.5 L24,19 Z" fill="#a8a8a8"/><circle cx="13.2" cy="26" r="3" fill="none" stroke="#0f6cbd" stroke-width="2.6"/><path d="M15.5,24 L20.5,21" stroke="#0f6cbd" stroke-width="2.4"/><circle cx="24" cy="29.6" r="3" fill="none" stroke="#36aef2" stroke-width="2.8"/><path d="M21.2,26 H23.5 V27" stroke="#36aef2" stroke-width="2.4"/></svg>
<div class="a" style="left:325px;top:898px;width:52px;height:2px;background:#0078d7;border-radius:0px;"></div>
<div class="a" style="left:396px;top:864px;width:32px;height:31px;background:#ef443b;border-radius:0px;"></div>
<svg class="a" style="left:396px;top:864px;" width="32" height="32" viewBox="0 0 32 32"><path d="M6,16 L13,9 L20,16 L13,23 Z" fill="#fff"/><path d="M18.5,9 L25.5,16 L18.5,23" fill="none" stroke="#fff" stroke-width="2.6"/></svg>
<svg class="a" style="left:457px;top:864px;" width="31" height="31" viewBox="0 0 31 31"><path d="M15.5,15.5 L2.51,8.00 A15,15 0 0 1 28.49,8.00 Z" fill="#db4437"/><path d="M15.5,15.5 L28.49,8.00 A15,15 0 0 1 15.50,30.50 Z" fill="#fcc934"/><path d="M15.5,15.5 L15.50,30.50 A15,15 0 0 1 2.51,8.00 Z" fill="#1e9e55"/><circle cx="15.5" cy="15.5" r="7" fill="#fff"/><circle cx="15.5" cy="15.5" r="5.4" fill="#4c8bf5"/></svg>
<div class="a" style="left:447px;top:898px;width:53px;height:2px;background:#0078d7;border-radius:0px;"></div>
<svg class="a" style="left:515px;top:862px;" width="36" height="36" viewBox="0 0 36 36"><defs><clipPath id="cbr"><rect x="3" y="2" width="32" height="32" rx="4.5"/></clipPath></defs><g clip-path="url(#cbr)"><rect x="0" y="0" width="36" height="36" fill="#ffffff"/><path d="M36,0 L36,36 L0,36 Z" fill="#e3e3e3"/></g><path d="M20.7,4.9 L7.3,18.2 L20.7,31.1 L26,26.2 Q17,24.5 17,18.2 Q17,12 25.1,9.6 Z" fill="#a9142a"/><circle cx="25.6" cy="17.8" r="3.8" fill="#a0102a"/></svg>
<div class="a" style="left:508px;top:898px;width:52px;height:2px;background:#0078d7;border-radius:0px;"></div>
<div class="a" style="left:508px;top:898px;width:8px;height:2px;background:#62b0f0;border-radius:0px;"></div>
<svg class="a" style="left:579px;top:866px;" width="32" height="27" viewBox="0 0 32 27"><rect x="8" y="1" width="23" height="25" rx="1.5" fill="#41a5ee"/><rect x="8" y="9" width="23" height="9" fill="#2b7cd3"/><rect x="8" y="18" width="23" height="8" fill="#185abd"/><rect x="1" y="6" width="17" height="16" rx="1.5" fill="#185abd"/><text x="9.5" y="19" font-family="Liberation Sans" font-weight="700" font-size="12" fill="#fff" text-anchor="middle">W</text></svg>
<svg class="a" style="left:640px;top:866px;" width="32" height="27" viewBox="0 0 32 27"><rect x="8" y="1" width="23" height="25" rx="1.5" fill="#21a366"/><rect x="19" y="1" width="12" height="25" fill="#33c481"/><rect x="8" y="18" width="23" height="8" fill="#107c41"/><rect x="1" y="6" width="17" height="16" rx="1.5" fill="#107c41"/><text x="9.5" y="19" font-family="Liberation Sans" font-weight="700" font-size="12" fill="#fff" text-anchor="middle">X</text></svg>
<svg class="a" style="left:702px;top:865px;" width="28" height="28" viewBox="0 0 28 28"><rect x="2" y="3" width="24" height="24" rx="2" fill="#9cc8e8" stroke="#6aa0c8"/><rect x="5" y="1" width="20" height="22" fill="#c8e4f8" stroke="#7ab"/><circle cx="14" cy="13" r="8" fill="#f08a1c"/><path d="M11,8.5 L18,13 L11,17.5 Z" fill="#fff"/></svg>
<svg class="a" style="left:762px;top:865px;" width="32" height="29" viewBox="0 0 32 29"><path d="M14,1 L23,1 L31,27 L24,27 L21,18 H13 L10,27 H2 Z" fill="#c8282a"/><path d="M15,12 H20 L18,6 Z" fill="#f2d0d0"/><path d="M8,16 H22 V12 L30,19 L22,26 V22 H8 Z" fill="#e84848" stroke="#fff" stroke-width="1"/></svg>
<svg class="a" style="left:823px;top:864px;" width="32" height="30" viewBox="0 0 32 30"><path d="M1,9 L16,1 L31,9 V29 H1 Z" fill="#0a64c8"/><path d="M1,11 L16,20 L31,11 V29 H1 Z" fill="#28a8ea"/><path d="M1,11 L16,20 L31,11 V9 L16,16 L1,9 Z" fill="#fff"/></svg>
<svg class="a" style="left:885px;top:865px;" width="30" height="29" viewBox="0 0 30 29"><path d="M15,1 Q28,1 29,14 V17 H9 Q10,23 17,23 Q23,23 27,20 V27 Q22,29 16,29 Q2,28 2,15 Q2,4 13,2 Q6,6 6,12 Q9,7 15,7 Q21,7 21,12 H9" fill="#1f86e0"/></svg>
<svg class="a" style="left:946px;top:866px;" width="30" height="27" viewBox="0 0 30 27"><rect x="1" y="3" width="28" height="24" fill="#f7c33c"/><rect x="1" y="1" width="12" height="4" fill="#e8a822"/><rect x="1" y="8" width="28" height="19" fill="#fcd660"/><rect x="12" y="20" width="6" height="5" fill="#1f86e0"/></svg>
</body></html>
